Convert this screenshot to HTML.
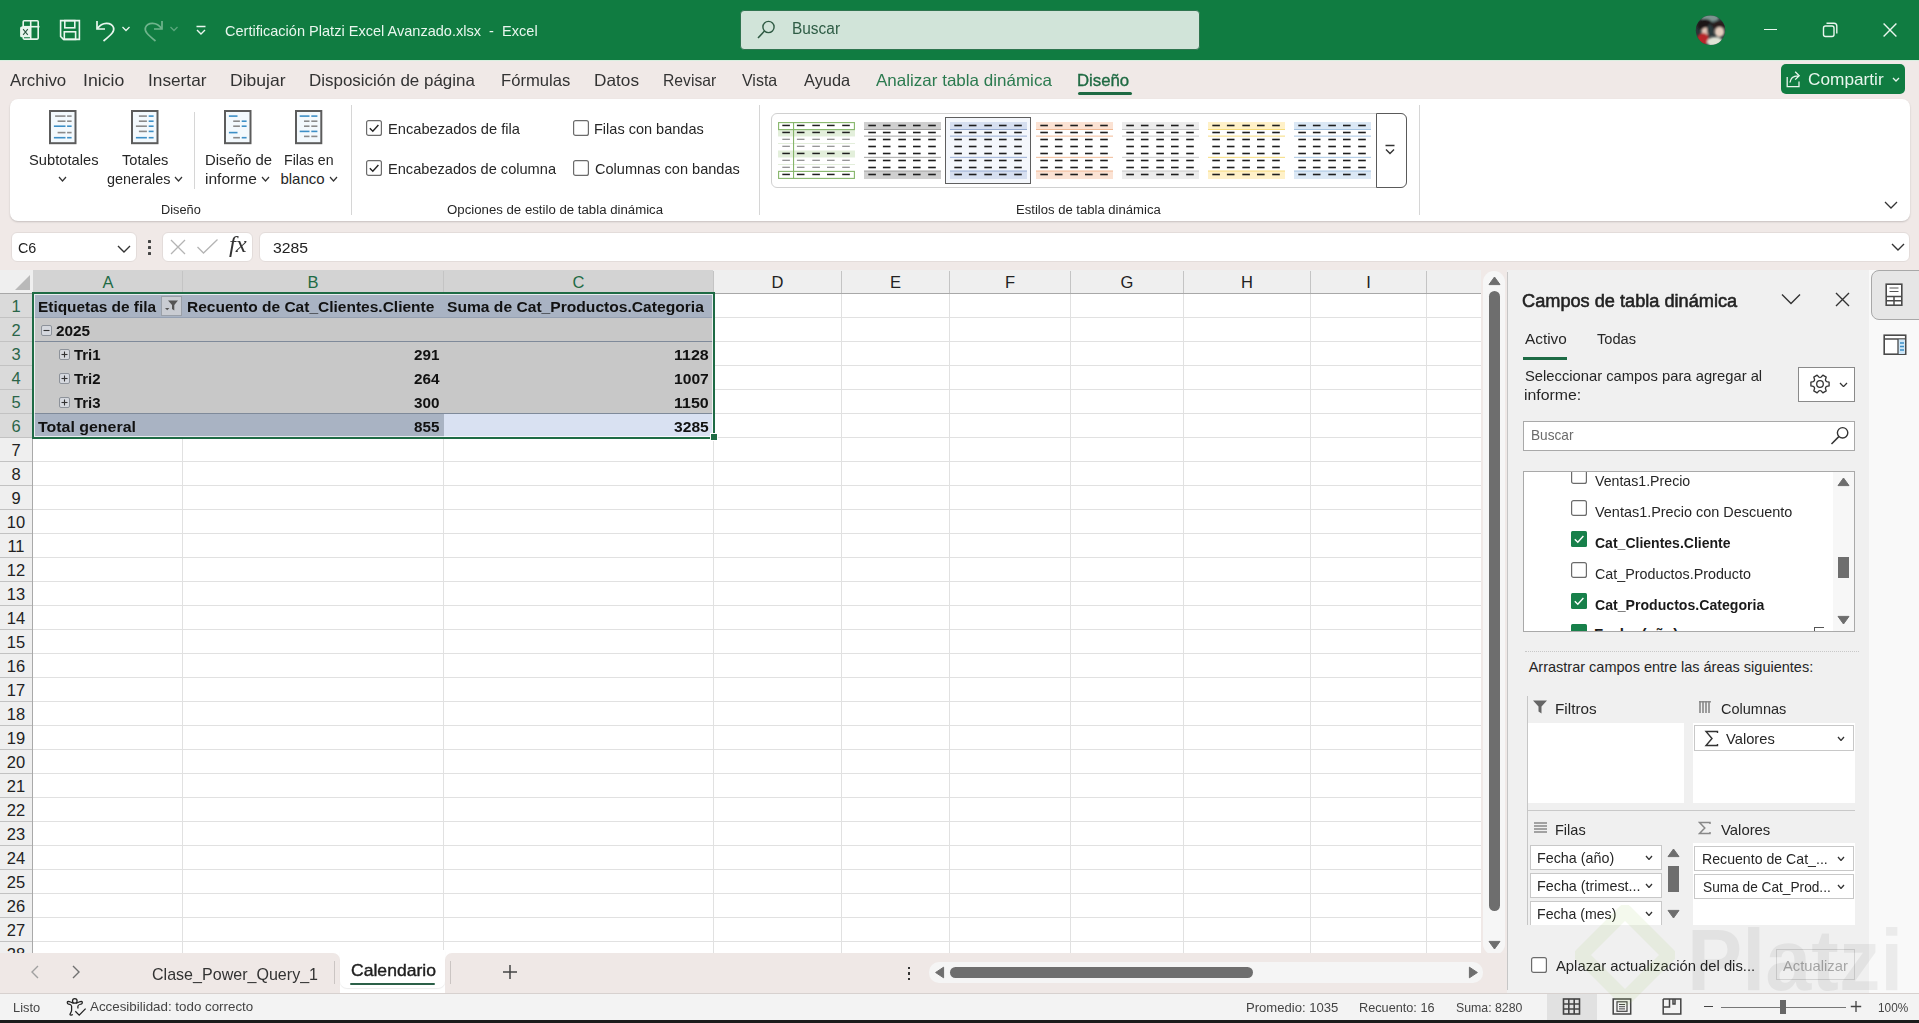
<!DOCTYPE html><html><head><meta charset="utf-8"><style>html,body{margin:0;padding:0;width:1919px;height:1023px;overflow:hidden;background:#f0e9e7}#app{position:relative;width:1919px;height:1023px;overflow:hidden;font-family:"Liberation Sans",sans-serif}#app svg{display:block}</style></head><body><div id="app"><div style="position:absolute;left:0px;top:0px;width:1919px;height:60px;background:#107c41"></div>
<svg style="position:absolute;left:18px;top:18px;" width="24" height="24" viewBox="0 0 24 24">
<rect x="5.2" y="2.8" width="15" height="18.3" rx="1" fill="none" stroke="#e9f6ee" stroke-width="1.6"/>
<line x1="12.7" y1="2.5" x2="12.7" y2="21.5" stroke="#e9f6ee" stroke-width="1.6"/>
<line x1="4.5" y1="8.7" x2="21.5" y2="8.7" stroke="#e9f6ee" stroke-width="1.6"/>
<rect x="2.1" y="8.5" width="10.9" height="10.8" rx="1.6" fill="#e9f6ee"/>
<path d="M5.1 11.2 L9.8 16.8 M9.8 11.2 L5.1 16.8" stroke="#2d5a43" stroke-width="1.1"/>
</svg>
<svg style="position:absolute;left:58px;top:18px;" width="24" height="24" viewBox="0 0 24 24">
<path d="M2.6 2.6 H21.4 V21.4 H5.5 L2.6 18.5 Z" fill="none" stroke="#e9f6ee" stroke-width="1.6"/>
<rect x="6.8" y="2.6" width="10" height="7.2" fill="none" stroke="#e9f6ee" stroke-width="1.6"/>
<rect x="6.3" y="13.8" width="11.3" height="7.6" fill="none" stroke="#e9f6ee" stroke-width="1.6"/>
</svg>
<svg style="position:absolute;left:94px;top:18px;" width="24" height="24" viewBox="0 0 24 24">
<path d="M3 3 V11 H11" fill="none" stroke="#e9f6ee" stroke-width="1.7"/>
<path d="M3.5 10.5 C8 3.5 17.5 4 19.5 9.5 C20.8 13 18 16 9.5 23" fill="none" stroke="#e9f6ee" stroke-width="1.7"/>
</svg>
<svg style="position:absolute;left:121px;top:25px;" width="10" height="8" viewBox="0 0 10 8"><path d="M1.5 2 L5 5.5 L8.5 2" fill="none" stroke="#e9f6ee" stroke-width="1.3"/></svg>
<svg style="position:absolute;left:141px;top:18px;" width="24" height="24" viewBox="0 0 24 24">
<path d="M21 3 V11 H13" fill="none" stroke="#6fb48c" stroke-width="1.7"/>
<path d="M20.5 10.5 C16 3.5 6.5 4 4.5 9.5 C3.2 13 6 16 14.5 23" fill="none" stroke="#6fb48c" stroke-width="1.7"/>
</svg>
<svg style="position:absolute;left:169px;top:25px;" width="10" height="8" viewBox="0 0 10 8"><path d="M1.5 2 L5 5.5 L8.5 2" fill="none" stroke="#5aa77c" stroke-width="1.3"/></svg>
<svg style="position:absolute;left:194px;top:25px;" width="14" height="12" viewBox="0 0 14 12"><path d="M2.5 1.5 H11.5 M3 5 L7 9 L11 5" fill="none" stroke="#e9f6ee" stroke-width="1.4"/></svg>
<div style="position:absolute;left:225.30px;top:22.700000000000003px;font:400 15px/1 'Liberation Sans';color:#e9f6ee;white-space:pre;transform:scaleX(0.9698);transform-origin:0 0;">Certificación Platzi Excel Avanzado.xlsx  -  Excel</div>
<div style="position:absolute;left:740px;top:10px;width:460px;height:40px;background:#d1e4d9;border-radius:4px;box-sizing:border-box;border:1px solid #2f7550"></div>
<svg style="position:absolute;left:755px;top:20px;" width="20" height="22" viewBox="0 0 20 22"><circle cx="13.5" cy="7" r="5.6" fill="none" stroke="#2f5a43" stroke-width="1.4"/><path d="M9.5 11 L3 18" stroke="#2f5a43" stroke-width="1.5"/></svg>
<div style="position:absolute;left:792.34px;top:20.9px;font:400 16px/1 'Liberation Sans';color:#2e5c45;white-space:pre;transform:scaleX(0.9642);transform-origin:0 0;">Buscar</div>
<svg style="position:absolute;left:1695px;top:15px;" width="31" height="31" viewBox="0 0 31 31"><defs><clipPath id="avc"><circle cx="15.5" cy="15.3" r="14.7"/></clipPath><filter id="avb"><feGaussianBlur stdDeviation="0.9"/></filter></defs><g clip-path="url(#avc)"><rect width="31" height="31" fill="#2b3538"/><g filter="url(#avb)"><ellipse cx="15" cy="3" rx="9" ry="4" fill="#7d9490"/><ellipse cx="10" cy="10" rx="8" ry="6" fill="#1e1616"/><ellipse cx="24" cy="11" rx="6.5" ry="5" fill="#2a1e1e"/><ellipse cx="11" cy="16.5" rx="4.6" ry="4" fill="#e3c6b8"/><ellipse cx="24.5" cy="17" rx="4.8" ry="5" fill="#e6cfc0"/><ellipse cx="8" cy="24" rx="6" ry="6" fill="#b8272a"/><ellipse cx="20" cy="27" rx="8" ry="5" fill="#dfe3d6"/><ellipse cx="15" cy="15" rx="3" ry="6" fill="#2c3a3d"/></g></g></svg>
<div style="position:absolute;left:1764px;top:29px;width:13px;height:1.4px;background:#e9f6ee"></div>
<svg style="position:absolute;left:1820px;top:20px;" width="20" height="20" viewBox="0 0 20 20"><rect x="3.5" y="6" width="10.5" height="10.5" rx="2" fill="none" stroke="#e9f6ee" stroke-width="1.4"/><path d="M6.5 3.2 H14 Q16.8 3.2 16.8 6 V13.5" fill="none" stroke="#e9f6ee" stroke-width="1.4"/></svg>
<svg style="position:absolute;left:1880px;top:20px;" width="20" height="20" viewBox="0 0 20 20"><path d="M3.6 3.6 L16.4 16.4 M16.4 3.6 L3.6 16.4" stroke="#e9f6ee" stroke-width="1.4"/></svg>
<div style="position:absolute;left:0px;top:60px;width:1919px;height:210px;background:#f0e9e7"></div>
<div style="position:absolute;left:0px;top:60px;width:1919px;height:1px;background:#d9efe0"></div>
<div style="position:absolute;left:10.30px;top:71.8px;font:400 16.5px/1 'Liberation Sans';color:#333;white-space:pre;transform:scaleX(1.0211);transform-origin:0 0;">Archivo</div>
<div style="position:absolute;left:82.93px;top:71.8px;font:400 16.5px/1 'Liberation Sans';color:#333;white-space:pre;transform:scaleX(1.0712);transform-origin:0 0;">Inicio</div>
<div style="position:absolute;left:147.95px;top:71.8px;font:400 16.5px/1 'Liberation Sans';color:#333;white-space:pre;transform:scaleX(1.0461);transform-origin:0 0;">Insertar</div>
<div style="position:absolute;left:229.94px;top:71.8px;font:400 16.5px/1 'Liberation Sans';color:#333;white-space:pre;transform:scaleX(1.0623);transform-origin:0 0;">Dibujar</div>
<div style="position:absolute;left:309.27px;top:71.8px;font:400 16.5px/1 'Liberation Sans';color:#333;white-space:pre;transform:scaleX(1.0275);transform-origin:0 0;">Disposición de página</div>
<div style="position:absolute;left:500.99px;top:71.8px;font:400 16.5px/1 'Liberation Sans';color:#333;white-space:pre;transform:scaleX(1.0072);transform-origin:0 0;">Fórmulas</div>
<div style="position:absolute;left:593.96px;top:71.8px;font:400 16.5px/1 'Liberation Sans';color:#333;white-space:pre;transform:scaleX(1.0441);transform-origin:0 0;">Datos</div>
<div style="position:absolute;left:663.05px;top:71.8px;font:400 16.5px/1 'Liberation Sans';color:#333;white-space:pre;transform:scaleX(0.9507);transform-origin:0 0;">Revisar</div>
<div style="position:absolute;left:742.00px;top:71.8px;font:400 16.5px/1 'Liberation Sans';color:#333;white-space:pre;transform:scaleX(0.9676);transform-origin:0 0;">Vista</div>
<div style="position:absolute;left:804.00px;top:71.8px;font:400 16.5px/1 'Liberation Sans';color:#333;white-space:pre;transform:scaleX(0.9934);transform-origin:0 0;">Ayuda</div>
<div style="position:absolute;left:876.30px;top:71.8px;font:400 16.5px/1 'Liberation Sans';color:#2b7a4f;white-space:pre;transform:scaleX(1.0308);transform-origin:0 0;">Analizar tabla dinámica</div>
<div style="position:absolute;left:1076.98px;top:71.8px;font:400 16.5px/1 'Liberation Sans';color:#1f6a43;white-space:pre;transform:scaleX(1.0162);transform-origin:0 0;-webkit-text-stroke:0.35px #1f6a43">Diseño</div>
<div style="position:absolute;left:1078px;top:92px;width:54px;height:3px;background:#1f6a43;border-radius:1.5px"></div>
<div style="position:absolute;left:1781px;top:64px;width:124px;height:30px;background:#107c41;border-radius:5px"></div>
<svg style="position:absolute;left:1785px;top:69px;" width="18" height="20" viewBox="0 0 18 20"><path d="M2.2 8 V17.6 H14 V12.5" fill="none" stroke="#e9f6ee" stroke-width="1.3"/><path d="M5 13.5 C5.5 9 8.5 6.8 13 6.8 M10.2 2.8 L14.2 6.8 L10.2 10.6" fill="none" stroke="#e9f6ee" stroke-width="1.3"/></svg>
<div style="position:absolute;left:1807.70px;top:70.9px;font:400 17px/1 'Liberation Sans';color:#e9f6ee;white-space:pre;transform:scaleX(1.0138);transform-origin:0 0;">Compartir</div>
<svg style="position:absolute;left:1889px;top:75px;" width="14" height="10" viewBox="0 0 14 10"><path d="M4 3 L7 6 L10 3" fill="none" stroke="#e9f6ee" stroke-width="1.3"/></svg>
<div style="position:absolute;left:10px;top:99px;width:1900px;height:122px;background:#fff;border-radius:8px;box-shadow:0 1px 2px rgba(0,0,0,0.18)"></div>
<svg style="position:absolute;left:49px;top:110px;" width="29" height="35" viewBox="0 0 29 35"><rect x="1" y="1" width="25.5" height="32.2" fill="#f3f9fd" stroke="#5c5c5c" stroke-width="2"/><line x1="6.1" y1="6.1" x2="16.5" y2="6.1" stroke="#8a8a8a" stroke-width="1.6"/><line x1="18.1" y1="6.1" x2="22.6" y2="6.1" stroke="#8a8a8a" stroke-width="1.6"/><line x1="8.6" y1="11.2" x2="16.5" y2="11.2" stroke="#8a8a8a" stroke-width="1.6"/><line x1="18.1" y1="11.2" x2="22.6" y2="11.2" stroke="#8a8a8a" stroke-width="1.6"/><line x1="4.9" y1="16.2" x2="16.5" y2="16.2" stroke="#3d8fc6" stroke-width="1.6"/><line x1="18.1" y1="16.2" x2="22.6" y2="16.2" stroke="#3d8fc6" stroke-width="1.6"/><line x1="8.6" y1="22.6" x2="16.5" y2="22.6" stroke="#8a8a8a" stroke-width="1.6"/><line x1="18.1" y1="22.6" x2="22.6" y2="22.6" stroke="#8a8a8a" stroke-width="1.6"/><line x1="4.9" y1="27.7" x2="16.5" y2="27.7" stroke="#3d8fc6" stroke-width="1.6"/><line x1="18.1" y1="27.7" x2="22.6" y2="27.7" stroke="#3d8fc6" stroke-width="1.6"/></svg>
<svg style="position:absolute;left:131px;top:110px;" width="29" height="35" viewBox="0 0 29 35"><rect x="1" y="1" width="25.5" height="32.2" fill="#f3f9fd" stroke="#5c5c5c" stroke-width="2"/><line x1="7.9" y1="6.1" x2="15.9" y2="6.1" stroke="#8a8a8a" stroke-width="1.6"/><line x1="17.7" y1="6.1" x2="22.6" y2="6.1" stroke="#3d8fc6" stroke-width="1.6"/><line x1="7.9" y1="11.2" x2="15.9" y2="11.2" stroke="#8a8a8a" stroke-width="1.6"/><line x1="17.7" y1="11.2" x2="22.6" y2="11.2" stroke="#3d8fc6" stroke-width="1.6"/><line x1="4.9" y1="16.2" x2="15.9" y2="16.2" stroke="#8a8a8a" stroke-width="1.6"/><line x1="17.7" y1="16.2" x2="22.6" y2="16.2" stroke="#3d8fc6" stroke-width="1.6"/><line x1="7.9" y1="21.4" x2="15.9" y2="21.4" stroke="#8a8a8a" stroke-width="1.6"/><line x1="17.7" y1="21.4" x2="22.6" y2="21.4" stroke="#3d8fc6" stroke-width="1.6"/><line x1="4.9" y1="27.7" x2="15.9" y2="27.7" stroke="#3d8fc6" stroke-width="1.6"/><line x1="17.7" y1="27.7" x2="22.6" y2="27.7" stroke="#3d8fc6" stroke-width="1.6"/></svg>
<svg style="position:absolute;left:224px;top:110px;" width="29" height="35" viewBox="0 0 29 35"><rect x="1" y="1" width="25.5" height="32.2" fill="#f3f9fd" stroke="#5c5c5c" stroke-width="2"/><line x1="4.9" y1="6.1" x2="13.5" y2="6.1" stroke="#3d8fc6" stroke-width="1.6"/><line x1="9.2" y1="11.2" x2="15.9" y2="11.2" stroke="#8a8a8a" stroke-width="1.6"/><line x1="17.7" y1="11.2" x2="22.6" y2="11.2" stroke="#3d8fc6" stroke-width="1.6"/><line x1="9.2" y1="16.2" x2="15.9" y2="16.2" stroke="#8a8a8a" stroke-width="1.6"/><line x1="17.7" y1="16.2" x2="22.6" y2="16.2" stroke="#3d8fc6" stroke-width="1.6"/><line x1="4.9" y1="22.6" x2="13.5" y2="22.6" stroke="#3d8fc6" stroke-width="1.6"/><line x1="9.2" y1="27.7" x2="15.9" y2="27.7" stroke="#8a8a8a" stroke-width="1.6"/><line x1="17.7" y1="27.7" x2="22.6" y2="27.7" stroke="#3d8fc6" stroke-width="1.6"/></svg>
<svg style="position:absolute;left:295px;top:110px;" width="28" height="35" viewBox="0 0 28 35"><rect x="1" y="1" width="25.3" height="32.2" fill="#f3f9fd" stroke="#5c5c5c" stroke-width="2"/><line x1="4.7" y1="6.1" x2="14.5" y2="6.1" stroke="#3d8fc6" stroke-width="1.6"/><line x1="16.3" y1="6.1" x2="22.4" y2="6.1" stroke="#3d8fc6" stroke-width="1.6"/><line x1="9.0" y1="11.2" x2="14.5" y2="11.2" stroke="#8a8a8a" stroke-width="1.6"/><line x1="16.3" y1="11.2" x2="22.4" y2="11.2" stroke="#8a8a8a" stroke-width="1.6"/><line x1="9.0" y1="16.2" x2="14.5" y2="16.2" stroke="#8a8a8a" stroke-width="1.6"/><line x1="16.3" y1="16.2" x2="22.4" y2="16.2" stroke="#8a8a8a" stroke-width="1.6"/><line x1="4.7" y1="21.4" x2="14.5" y2="21.4" stroke="#3d8fc6" stroke-width="1.6"/><line x1="16.3" y1="21.4" x2="22.4" y2="21.4" stroke="#3d8fc6" stroke-width="1.6"/><line x1="9.0" y1="26.4" x2="14.5" y2="26.4" stroke="#8a8a8a" stroke-width="1.6"/><line x1="16.3" y1="26.4" x2="22.4" y2="26.4" stroke="#8a8a8a" stroke-width="1.6"/></svg>
<div style="position:absolute;left:28.60px;top:151.8px;font:400 15px/1 'Liberation Sans';color:#262626;white-space:pre;transform:scaleX(0.9803);transform-origin:0 0;">Subtotales</div>
<svg style="position:absolute;left:57.9px;top:175.5px;" width="9" height="6" viewBox="0 0 9 6"><path d="M1 1 L4.5 5 L8 1" fill="none" stroke="#333" stroke-width="1.2"/></svg>
<div style="position:absolute;left:122.00px;top:151.8px;font:400 15px/1 'Liberation Sans';color:#262626;white-space:pre;transform:scaleX(0.9760);transform-origin:0 0;">Totales</div>
<div style="position:absolute;left:106.80px;top:171.3px;font:400 15px/1 'Liberation Sans';color:#262626;white-space:pre;transform:scaleX(0.9620);transform-origin:0 0;">generales</div>
<svg style="position:absolute;left:174.0px;top:175.5px;" width="9" height="6" viewBox="0 0 9 6"><path d="M1 1 L4.5 5 L8 1" fill="none" stroke="#333" stroke-width="1.2"/></svg>
<div style="position:absolute;left:194px;top:112px;width:1px;height:77px;background:#d6d6d6"></div>
<div style="position:absolute;left:204.61px;top:151.8px;font:400 15px/1 'Liberation Sans';color:#262626;white-space:pre;transform:scaleX(0.9924);transform-origin:0 0;">Diseño de</div>
<div style="position:absolute;left:204.56px;top:171.3px;font:400 15px/1 'Liberation Sans';color:#262626;white-space:pre;transform:scaleX(1.0354);transform-origin:0 0;">informe</div>
<svg style="position:absolute;left:260.9px;top:175.5px;" width="9" height="6" viewBox="0 0 9 6"><path d="M1 1 L4.5 5 L8 1" fill="none" stroke="#333" stroke-width="1.2"/></svg>
<div style="position:absolute;left:284.36px;top:151.8px;font:400 15px/1 'Liberation Sans';color:#262626;white-space:pre;transform:scaleX(0.9437);transform-origin:0 0;">Filas en</div>
<div style="position:absolute;left:280.40px;top:171.3px;font:400 15px/1 'Liberation Sans';color:#262626;white-space:pre;">blanco</div>
<svg style="position:absolute;left:329.3px;top:175.5px;" width="9" height="6" viewBox="0 0 9 6"><path d="M1 1 L4.5 5 L8 1" fill="none" stroke="#333" stroke-width="1.2"/></svg>
<div style="position:absolute;left:161.48px;top:203.9px;font:400 12.5px/1 'Liberation Sans';color:#262626;white-space:pre;transform:scaleX(1.0222);transform-origin:0 0;">Diseño</div>
<div style="position:absolute;left:351px;top:105px;width:1px;height:110px;background:#d6d6d6"></div>
<svg style="position:absolute;left:366px;top:120px;" width="16" height="16" viewBox="0 0 16 16"><rect x="0.6" y="0.6" width="14.8" height="14.8" rx="2" fill="#fff" stroke="#6b6b6b" stroke-width="1.2"/><path d="M3.8 8.2 L6.8 11.2 L12.4 5" fill="none" stroke="#222" stroke-width="1.4"/></svg>
<svg style="position:absolute;left:366px;top:160px;" width="16" height="16" viewBox="0 0 16 16"><rect x="0.6" y="0.6" width="14.8" height="14.8" rx="2" fill="#fff" stroke="#6b6b6b" stroke-width="1.2"/><path d="M3.8 8.2 L6.8 11.2 L12.4 5" fill="none" stroke="#222" stroke-width="1.4"/></svg>
<svg style="position:absolute;left:573px;top:120px;" width="16" height="16" viewBox="0 0 16 16"><rect x="0.6" y="0.6" width="14.8" height="14.8" rx="2" fill="#fff" stroke="#6b6b6b" stroke-width="1.2"/></svg>
<svg style="position:absolute;left:573px;top:160px;" width="16" height="16" viewBox="0 0 16 16"><rect x="0.6" y="0.6" width="14.8" height="14.8" rx="2" fill="#fff" stroke="#6b6b6b" stroke-width="1.2"/></svg>
<div style="position:absolute;left:387.82px;top:120.69999999999999px;font:400 15px/1 'Liberation Sans';color:#262626;white-space:pre;transform:scaleX(0.9766);transform-origin:0 0;">Encabezados de fila</div>
<div style="position:absolute;left:387.83px;top:160.6px;font:400 15px/1 'Liberation Sans';color:#262626;white-space:pre;transform:scaleX(0.9734);transform-origin:0 0;">Encabezados de columna</div>
<div style="position:absolute;left:594.43px;top:120.69999999999999px;font:400 15px/1 'Liberation Sans';color:#262626;white-space:pre;transform:scaleX(0.9678);transform-origin:0 0;">Filas con bandas</div>
<div style="position:absolute;left:595.40px;top:160.6px;font:400 15px/1 'Liberation Sans';color:#262626;white-space:pre;transform:scaleX(0.9700);transform-origin:0 0;">Columnas con bandas</div>
<div style="position:absolute;left:446.50px;top:204px;font:400 12.5px/1 'Liberation Sans';color:#262626;white-space:pre;transform:scaleX(1.0576);transform-origin:0 0;">Opciones de estilo de tabla dinámica</div>
<div style="position:absolute;left:759px;top:105px;width:1px;height:110px;background:#d6d6d6"></div>
<div style="position:absolute;left:771px;top:113px;width:636px;height:75px;box-sizing:border-box;border:1px solid #d0d0d0;border-radius:6px;background:#fff"></div>
<div style="position:absolute;left:1376px;top:113px;width:31px;height:75px;box-sizing:border-box;border:1px solid #5a5a5a;border-radius:0 6px 6px 0;background:#fff"></div>
<svg style="position:absolute;left:1382px;top:142.5px;" width="16" height="14" viewBox="0 0 16 14"><path d="M3.5 2.5 H12.5 M4 6.5 L8 10.5 L12 6.5" fill="none" stroke="#333" stroke-width="1.4"/></svg>
<svg style="position:absolute;left:778px;top:122px;" width="77" height="57" viewBox="0 0 77 57"><rect x="0" y="7.5" width="77" height="7" fill="#e3efdb"/><rect x="0" y="28.5" width="77" height="7" fill="#e3efdb"/><rect x="0" y="21" width="77" height="0.8" fill="#dcead2"/><rect x="0" y="42" width="77" height="0.8" fill="#dcead2"/><rect x="0.6" y="0.6" width="75.8" height="7" fill="none" stroke="#86b66a" stroke-width="1.1"/><rect x="0.6" y="49.4" width="75.8" height="7" fill="none" stroke="#86b66a" stroke-width="1.1"/><rect x="15" y="0" width="1.1" height="57" fill="#86b66a"/><rect x="4.3" y="2.7" width="7.6" height="1.5" fill="#1e1e1e"/><rect x="18.9" y="2.7" width="7.6" height="1.5" fill="#1e1e1e"/><rect x="34.3" y="2.7" width="7.6" height="1.5" fill="#1e1e1e"/><rect x="49" y="2.7" width="7.6" height="1.5" fill="#1e1e1e"/><rect x="64.2" y="2.7" width="7.6" height="1.5" fill="#1e1e1e"/><rect x="4.3" y="9.7" width="7.6" height="1.5" fill="#1e1e1e"/><rect x="18.9" y="9.7" width="7.6" height="1.5" fill="#1e1e1e"/><rect x="34.3" y="9.7" width="7.6" height="1.5" fill="#1e1e1e"/><rect x="49" y="9.7" width="7.6" height="1.5" fill="#1e1e1e"/><rect x="64.2" y="9.7" width="7.6" height="1.5" fill="#1e1e1e"/><rect x="4.3" y="16.7" width="7.6" height="1.2" fill="#8c8c8c"/><rect x="18.9" y="16.7" width="7.6" height="1.2" fill="#8c8c8c"/><rect x="34.3" y="16.7" width="7.6" height="1.2" fill="#8c8c8c"/><rect x="49" y="16.7" width="7.6" height="1.2" fill="#8c8c8c"/><rect x="64.2" y="16.7" width="7.6" height="1.2" fill="#8c8c8c"/><rect x="4.3" y="23.7" width="7.6" height="1.2" fill="#8c8c8c"/><rect x="18.9" y="23.7" width="7.6" height="1.2" fill="#8c8c8c"/><rect x="34.3" y="23.7" width="7.6" height="1.2" fill="#8c8c8c"/><rect x="49" y="23.7" width="7.6" height="1.2" fill="#8c8c8c"/><rect x="64.2" y="23.7" width="7.6" height="1.2" fill="#8c8c8c"/><rect x="4.3" y="30.7" width="7.6" height="1.5" fill="#1e1e1e"/><rect x="18.9" y="30.7" width="7.6" height="1.5" fill="#1e1e1e"/><rect x="34.3" y="30.7" width="7.6" height="1.5" fill="#1e1e1e"/><rect x="49" y="30.7" width="7.6" height="1.5" fill="#1e1e1e"/><rect x="64.2" y="30.7" width="7.6" height="1.5" fill="#1e1e1e"/><rect x="4.3" y="37.7" width="7.6" height="1.2" fill="#8c8c8c"/><rect x="18.9" y="37.7" width="7.6" height="1.2" fill="#8c8c8c"/><rect x="34.3" y="37.7" width="7.6" height="1.2" fill="#8c8c8c"/><rect x="49" y="37.7" width="7.6" height="1.2" fill="#8c8c8c"/><rect x="64.2" y="37.7" width="7.6" height="1.2" fill="#8c8c8c"/><rect x="4.3" y="44.7" width="7.6" height="1.2" fill="#8c8c8c"/><rect x="18.9" y="44.7" width="7.6" height="1.2" fill="#8c8c8c"/><rect x="34.3" y="44.7" width="7.6" height="1.2" fill="#8c8c8c"/><rect x="49" y="44.7" width="7.6" height="1.2" fill="#8c8c8c"/><rect x="64.2" y="44.7" width="7.6" height="1.2" fill="#8c8c8c"/><rect x="4.3" y="51.7" width="7.6" height="1.5" fill="#1e1e1e"/><rect x="18.9" y="51.7" width="7.6" height="1.5" fill="#1e1e1e"/><rect x="34.3" y="51.7" width="7.6" height="1.5" fill="#1e1e1e"/><rect x="49" y="51.7" width="7.6" height="1.5" fill="#1e1e1e"/><rect x="64.2" y="51.7" width="7.6" height="1.5" fill="#1e1e1e"/></svg>
<svg style="position:absolute;left:864px;top:122px;" width="77" height="57" viewBox="0 0 77 57"><rect x="0" y="0" width="77" height="7.5" fill="#cfcfcf"/><rect x="0" y="49" width="77" height="8" fill="#cfcfcf"/><rect x="0" y="7.05" width="77" height="0.9" fill="#9a9a9a"/><rect x="0" y="13.65" width="77" height="0.9" fill="#9a9a9a"/><rect x="0" y="34.849999999999994" width="77" height="0.9" fill="#9a9a9a"/><rect x="0" y="48.55" width="77" height="0.9" fill="#9a9a9a"/><rect x="4.3" y="2.7" width="7.6" height="1.6" fill="#1e1e1e"/><rect x="18.9" y="2.7" width="7.6" height="1.6" fill="#1e1e1e"/><rect x="34.3" y="2.7" width="7.6" height="1.6" fill="#1e1e1e"/><rect x="49" y="2.7" width="7.6" height="1.6" fill="#1e1e1e"/><rect x="64.2" y="2.7" width="7.6" height="1.6" fill="#1e1e1e"/><rect x="4.3" y="9.7" width="7.6" height="1.6" fill="#1e1e1e"/><rect x="18.9" y="9.7" width="7.6" height="1.6" fill="#1e1e1e"/><rect x="34.3" y="9.7" width="7.6" height="1.6" fill="#1e1e1e"/><rect x="49" y="9.7" width="7.6" height="1.6" fill="#1e1e1e"/><rect x="64.2" y="9.7" width="7.6" height="1.6" fill="#1e1e1e"/><rect x="4.3" y="16.7" width="7.6" height="1.6" fill="#1e1e1e"/><rect x="18.9" y="16.7" width="7.6" height="1.6" fill="#1e1e1e"/><rect x="34.3" y="16.7" width="7.6" height="1.6" fill="#1e1e1e"/><rect x="49" y="16.7" width="7.6" height="1.6" fill="#1e1e1e"/><rect x="64.2" y="16.7" width="7.6" height="1.6" fill="#1e1e1e"/><rect x="4.3" y="23.7" width="7.6" height="1.6" fill="#1e1e1e"/><rect x="18.9" y="23.7" width="7.6" height="1.6" fill="#1e1e1e"/><rect x="34.3" y="23.7" width="7.6" height="1.6" fill="#1e1e1e"/><rect x="49" y="23.7" width="7.6" height="1.6" fill="#1e1e1e"/><rect x="64.2" y="23.7" width="7.6" height="1.6" fill="#1e1e1e"/><rect x="4.3" y="30.7" width="7.6" height="1.6" fill="#1e1e1e"/><rect x="18.9" y="30.7" width="7.6" height="1.6" fill="#1e1e1e"/><rect x="34.3" y="30.7" width="7.6" height="1.6" fill="#1e1e1e"/><rect x="49" y="30.7" width="7.6" height="1.6" fill="#1e1e1e"/><rect x="64.2" y="30.7" width="7.6" height="1.6" fill="#1e1e1e"/><rect x="4.3" y="37.7" width="7.6" height="1.6" fill="#1e1e1e"/><rect x="18.9" y="37.7" width="7.6" height="1.6" fill="#1e1e1e"/><rect x="34.3" y="37.7" width="7.6" height="1.6" fill="#1e1e1e"/><rect x="49" y="37.7" width="7.6" height="1.6" fill="#1e1e1e"/><rect x="64.2" y="37.7" width="7.6" height="1.6" fill="#1e1e1e"/><rect x="4.3" y="44.7" width="7.6" height="1.6" fill="#1e1e1e"/><rect x="18.9" y="44.7" width="7.6" height="1.6" fill="#1e1e1e"/><rect x="34.3" y="44.7" width="7.6" height="1.6" fill="#1e1e1e"/><rect x="49" y="44.7" width="7.6" height="1.6" fill="#1e1e1e"/><rect x="64.2" y="44.7" width="7.6" height="1.6" fill="#1e1e1e"/><rect x="4.3" y="51.7" width="7.6" height="1.6" fill="#1e1e1e"/><rect x="18.9" y="51.7" width="7.6" height="1.6" fill="#1e1e1e"/><rect x="34.3" y="51.7" width="7.6" height="1.6" fill="#1e1e1e"/><rect x="49" y="51.7" width="7.6" height="1.6" fill="#1e1e1e"/><rect x="64.2" y="51.7" width="7.6" height="1.6" fill="#1e1e1e"/></svg>
<div style="position:absolute;left:945px;top:117px;width:86px;height:67px;box-sizing:border-box;border:1.5px solid #5f5f5f;background:#f4f7fc"></div>
<svg style="position:absolute;left:950px;top:122px;" width="77" height="57" viewBox="0 0 77 57"><rect x="0" y="0" width="77" height="7.5" fill="#d6dff0"/><rect x="0" y="49" width="77" height="8" fill="#d6dff0"/><rect x="0" y="7.05" width="77" height="0.9" fill="#8ea5cf"/><rect x="0" y="13.65" width="77" height="0.9" fill="#8ea5cf"/><rect x="0" y="34.849999999999994" width="77" height="0.9" fill="#8ea5cf"/><rect x="0" y="48.55" width="77" height="0.9" fill="#8ea5cf"/><rect x="4.3" y="2.7" width="7.6" height="1.6" fill="#1e1e1e"/><rect x="18.9" y="2.7" width="7.6" height="1.6" fill="#1e1e1e"/><rect x="34.3" y="2.7" width="7.6" height="1.6" fill="#1e1e1e"/><rect x="49" y="2.7" width="7.6" height="1.6" fill="#1e1e1e"/><rect x="64.2" y="2.7" width="7.6" height="1.6" fill="#1e1e1e"/><rect x="4.3" y="9.7" width="7.6" height="1.6" fill="#1e1e1e"/><rect x="18.9" y="9.7" width="7.6" height="1.6" fill="#1e1e1e"/><rect x="34.3" y="9.7" width="7.6" height="1.6" fill="#1e1e1e"/><rect x="49" y="9.7" width="7.6" height="1.6" fill="#1e1e1e"/><rect x="64.2" y="9.7" width="7.6" height="1.6" fill="#1e1e1e"/><rect x="4.3" y="16.7" width="7.6" height="1.6" fill="#1e1e1e"/><rect x="18.9" y="16.7" width="7.6" height="1.6" fill="#1e1e1e"/><rect x="34.3" y="16.7" width="7.6" height="1.6" fill="#1e1e1e"/><rect x="49" y="16.7" width="7.6" height="1.6" fill="#1e1e1e"/><rect x="64.2" y="16.7" width="7.6" height="1.6" fill="#1e1e1e"/><rect x="4.3" y="23.7" width="7.6" height="1.6" fill="#1e1e1e"/><rect x="18.9" y="23.7" width="7.6" height="1.6" fill="#1e1e1e"/><rect x="34.3" y="23.7" width="7.6" height="1.6" fill="#1e1e1e"/><rect x="49" y="23.7" width="7.6" height="1.6" fill="#1e1e1e"/><rect x="64.2" y="23.7" width="7.6" height="1.6" fill="#1e1e1e"/><rect x="4.3" y="30.7" width="7.6" height="1.6" fill="#1e1e1e"/><rect x="18.9" y="30.7" width="7.6" height="1.6" fill="#1e1e1e"/><rect x="34.3" y="30.7" width="7.6" height="1.6" fill="#1e1e1e"/><rect x="49" y="30.7" width="7.6" height="1.6" fill="#1e1e1e"/><rect x="64.2" y="30.7" width="7.6" height="1.6" fill="#1e1e1e"/><rect x="4.3" y="37.7" width="7.6" height="1.6" fill="#1e1e1e"/><rect x="18.9" y="37.7" width="7.6" height="1.6" fill="#1e1e1e"/><rect x="34.3" y="37.7" width="7.6" height="1.6" fill="#1e1e1e"/><rect x="49" y="37.7" width="7.6" height="1.6" fill="#1e1e1e"/><rect x="64.2" y="37.7" width="7.6" height="1.6" fill="#1e1e1e"/><rect x="4.3" y="44.7" width="7.6" height="1.6" fill="#1e1e1e"/><rect x="18.9" y="44.7" width="7.6" height="1.6" fill="#1e1e1e"/><rect x="34.3" y="44.7" width="7.6" height="1.6" fill="#1e1e1e"/><rect x="49" y="44.7" width="7.6" height="1.6" fill="#1e1e1e"/><rect x="64.2" y="44.7" width="7.6" height="1.6" fill="#1e1e1e"/><rect x="4.3" y="51.7" width="7.6" height="1.6" fill="#1e1e1e"/><rect x="18.9" y="51.7" width="7.6" height="1.6" fill="#1e1e1e"/><rect x="34.3" y="51.7" width="7.6" height="1.6" fill="#1e1e1e"/><rect x="49" y="51.7" width="7.6" height="1.6" fill="#1e1e1e"/><rect x="64.2" y="51.7" width="7.6" height="1.6" fill="#1e1e1e"/></svg>
<svg style="position:absolute;left:1036px;top:122px;" width="77" height="57" viewBox="0 0 77 57"><rect x="0" y="0" width="77" height="7.5" fill="#fbe2d3"/><rect x="0" y="49" width="77" height="8" fill="#fbe2d3"/><rect x="0" y="7.05" width="77" height="0.9" fill="#f0b28a"/><rect x="0" y="13.65" width="77" height="0.9" fill="#f0b28a"/><rect x="0" y="34.849999999999994" width="77" height="0.9" fill="#f0b28a"/><rect x="0" y="48.55" width="77" height="0.9" fill="#f0b28a"/><rect x="4.3" y="2.7" width="7.6" height="1.6" fill="#1e1e1e"/><rect x="18.9" y="2.7" width="7.6" height="1.6" fill="#1e1e1e"/><rect x="34.3" y="2.7" width="7.6" height="1.6" fill="#1e1e1e"/><rect x="49" y="2.7" width="7.6" height="1.6" fill="#1e1e1e"/><rect x="64.2" y="2.7" width="7.6" height="1.6" fill="#1e1e1e"/><rect x="4.3" y="9.7" width="7.6" height="1.6" fill="#1e1e1e"/><rect x="18.9" y="9.7" width="7.6" height="1.6" fill="#1e1e1e"/><rect x="34.3" y="9.7" width="7.6" height="1.6" fill="#1e1e1e"/><rect x="49" y="9.7" width="7.6" height="1.6" fill="#1e1e1e"/><rect x="64.2" y="9.7" width="7.6" height="1.6" fill="#1e1e1e"/><rect x="4.3" y="16.7" width="7.6" height="1.6" fill="#1e1e1e"/><rect x="18.9" y="16.7" width="7.6" height="1.6" fill="#1e1e1e"/><rect x="34.3" y="16.7" width="7.6" height="1.6" fill="#1e1e1e"/><rect x="49" y="16.7" width="7.6" height="1.6" fill="#1e1e1e"/><rect x="64.2" y="16.7" width="7.6" height="1.6" fill="#1e1e1e"/><rect x="4.3" y="23.7" width="7.6" height="1.6" fill="#1e1e1e"/><rect x="18.9" y="23.7" width="7.6" height="1.6" fill="#1e1e1e"/><rect x="34.3" y="23.7" width="7.6" height="1.6" fill="#1e1e1e"/><rect x="49" y="23.7" width="7.6" height="1.6" fill="#1e1e1e"/><rect x="64.2" y="23.7" width="7.6" height="1.6" fill="#1e1e1e"/><rect x="4.3" y="30.7" width="7.6" height="1.6" fill="#1e1e1e"/><rect x="18.9" y="30.7" width="7.6" height="1.6" fill="#1e1e1e"/><rect x="34.3" y="30.7" width="7.6" height="1.6" fill="#1e1e1e"/><rect x="49" y="30.7" width="7.6" height="1.6" fill="#1e1e1e"/><rect x="64.2" y="30.7" width="7.6" height="1.6" fill="#1e1e1e"/><rect x="4.3" y="37.7" width="7.6" height="1.6" fill="#1e1e1e"/><rect x="18.9" y="37.7" width="7.6" height="1.6" fill="#1e1e1e"/><rect x="34.3" y="37.7" width="7.6" height="1.6" fill="#1e1e1e"/><rect x="49" y="37.7" width="7.6" height="1.6" fill="#1e1e1e"/><rect x="64.2" y="37.7" width="7.6" height="1.6" fill="#1e1e1e"/><rect x="4.3" y="44.7" width="7.6" height="1.6" fill="#1e1e1e"/><rect x="18.9" y="44.7" width="7.6" height="1.6" fill="#1e1e1e"/><rect x="34.3" y="44.7" width="7.6" height="1.6" fill="#1e1e1e"/><rect x="49" y="44.7" width="7.6" height="1.6" fill="#1e1e1e"/><rect x="64.2" y="44.7" width="7.6" height="1.6" fill="#1e1e1e"/><rect x="4.3" y="51.7" width="7.6" height="1.6" fill="#1e1e1e"/><rect x="18.9" y="51.7" width="7.6" height="1.6" fill="#1e1e1e"/><rect x="34.3" y="51.7" width="7.6" height="1.6" fill="#1e1e1e"/><rect x="49" y="51.7" width="7.6" height="1.6" fill="#1e1e1e"/><rect x="64.2" y="51.7" width="7.6" height="1.6" fill="#1e1e1e"/></svg>
<svg style="position:absolute;left:1122px;top:122px;" width="77" height="57" viewBox="0 0 77 57"><rect x="0" y="0" width="77" height="7.5" fill="#ececec"/><rect x="0" y="49" width="77" height="8" fill="#ececec"/><rect x="0" y="7.05" width="77" height="0.9" fill="#c4c4c4"/><rect x="0" y="13.65" width="77" height="0.9" fill="#c4c4c4"/><rect x="0" y="34.849999999999994" width="77" height="0.9" fill="#c4c4c4"/><rect x="0" y="48.55" width="77" height="0.9" fill="#c4c4c4"/><rect x="4.3" y="2.7" width="7.6" height="1.6" fill="#1e1e1e"/><rect x="18.9" y="2.7" width="7.6" height="1.6" fill="#1e1e1e"/><rect x="34.3" y="2.7" width="7.6" height="1.6" fill="#1e1e1e"/><rect x="49" y="2.7" width="7.6" height="1.6" fill="#1e1e1e"/><rect x="64.2" y="2.7" width="7.6" height="1.6" fill="#1e1e1e"/><rect x="4.3" y="9.7" width="7.6" height="1.6" fill="#1e1e1e"/><rect x="18.9" y="9.7" width="7.6" height="1.6" fill="#1e1e1e"/><rect x="34.3" y="9.7" width="7.6" height="1.6" fill="#1e1e1e"/><rect x="49" y="9.7" width="7.6" height="1.6" fill="#1e1e1e"/><rect x="64.2" y="9.7" width="7.6" height="1.6" fill="#1e1e1e"/><rect x="4.3" y="16.7" width="7.6" height="1.6" fill="#1e1e1e"/><rect x="18.9" y="16.7" width="7.6" height="1.6" fill="#1e1e1e"/><rect x="34.3" y="16.7" width="7.6" height="1.6" fill="#1e1e1e"/><rect x="49" y="16.7" width="7.6" height="1.6" fill="#1e1e1e"/><rect x="64.2" y="16.7" width="7.6" height="1.6" fill="#1e1e1e"/><rect x="4.3" y="23.7" width="7.6" height="1.6" fill="#1e1e1e"/><rect x="18.9" y="23.7" width="7.6" height="1.6" fill="#1e1e1e"/><rect x="34.3" y="23.7" width="7.6" height="1.6" fill="#1e1e1e"/><rect x="49" y="23.7" width="7.6" height="1.6" fill="#1e1e1e"/><rect x="64.2" y="23.7" width="7.6" height="1.6" fill="#1e1e1e"/><rect x="4.3" y="30.7" width="7.6" height="1.6" fill="#1e1e1e"/><rect x="18.9" y="30.7" width="7.6" height="1.6" fill="#1e1e1e"/><rect x="34.3" y="30.7" width="7.6" height="1.6" fill="#1e1e1e"/><rect x="49" y="30.7" width="7.6" height="1.6" fill="#1e1e1e"/><rect x="64.2" y="30.7" width="7.6" height="1.6" fill="#1e1e1e"/><rect x="4.3" y="37.7" width="7.6" height="1.6" fill="#1e1e1e"/><rect x="18.9" y="37.7" width="7.6" height="1.6" fill="#1e1e1e"/><rect x="34.3" y="37.7" width="7.6" height="1.6" fill="#1e1e1e"/><rect x="49" y="37.7" width="7.6" height="1.6" fill="#1e1e1e"/><rect x="64.2" y="37.7" width="7.6" height="1.6" fill="#1e1e1e"/><rect x="4.3" y="44.7" width="7.6" height="1.6" fill="#1e1e1e"/><rect x="18.9" y="44.7" width="7.6" height="1.6" fill="#1e1e1e"/><rect x="34.3" y="44.7" width="7.6" height="1.6" fill="#1e1e1e"/><rect x="49" y="44.7" width="7.6" height="1.6" fill="#1e1e1e"/><rect x="64.2" y="44.7" width="7.6" height="1.6" fill="#1e1e1e"/><rect x="4.3" y="51.7" width="7.6" height="1.6" fill="#1e1e1e"/><rect x="18.9" y="51.7" width="7.6" height="1.6" fill="#1e1e1e"/><rect x="34.3" y="51.7" width="7.6" height="1.6" fill="#1e1e1e"/><rect x="49" y="51.7" width="7.6" height="1.6" fill="#1e1e1e"/><rect x="64.2" y="51.7" width="7.6" height="1.6" fill="#1e1e1e"/></svg>
<svg style="position:absolute;left:1208px;top:122px;" width="77" height="57" viewBox="0 0 77 57"><rect x="0" y="0" width="77" height="7.5" fill="#fff1c8"/><rect x="0" y="49" width="77" height="8" fill="#fff1c8"/><rect x="0" y="7.05" width="77" height="0.9" fill="#f5d76e"/><rect x="0" y="13.65" width="77" height="0.9" fill="#f5d76e"/><rect x="0" y="34.849999999999994" width="77" height="0.9" fill="#f5d76e"/><rect x="0" y="48.55" width="77" height="0.9" fill="#f5d76e"/><rect x="4.3" y="2.7" width="7.6" height="1.6" fill="#1e1e1e"/><rect x="18.9" y="2.7" width="7.6" height="1.6" fill="#1e1e1e"/><rect x="34.3" y="2.7" width="7.6" height="1.6" fill="#1e1e1e"/><rect x="49" y="2.7" width="7.6" height="1.6" fill="#1e1e1e"/><rect x="64.2" y="2.7" width="7.6" height="1.6" fill="#1e1e1e"/><rect x="4.3" y="9.7" width="7.6" height="1.6" fill="#1e1e1e"/><rect x="18.9" y="9.7" width="7.6" height="1.6" fill="#1e1e1e"/><rect x="34.3" y="9.7" width="7.6" height="1.6" fill="#1e1e1e"/><rect x="49" y="9.7" width="7.6" height="1.6" fill="#1e1e1e"/><rect x="64.2" y="9.7" width="7.6" height="1.6" fill="#1e1e1e"/><rect x="4.3" y="16.7" width="7.6" height="1.6" fill="#1e1e1e"/><rect x="18.9" y="16.7" width="7.6" height="1.6" fill="#1e1e1e"/><rect x="34.3" y="16.7" width="7.6" height="1.6" fill="#1e1e1e"/><rect x="49" y="16.7" width="7.6" height="1.6" fill="#1e1e1e"/><rect x="64.2" y="16.7" width="7.6" height="1.6" fill="#1e1e1e"/><rect x="4.3" y="23.7" width="7.6" height="1.6" fill="#1e1e1e"/><rect x="18.9" y="23.7" width="7.6" height="1.6" fill="#1e1e1e"/><rect x="34.3" y="23.7" width="7.6" height="1.6" fill="#1e1e1e"/><rect x="49" y="23.7" width="7.6" height="1.6" fill="#1e1e1e"/><rect x="64.2" y="23.7" width="7.6" height="1.6" fill="#1e1e1e"/><rect x="4.3" y="30.7" width="7.6" height="1.6" fill="#1e1e1e"/><rect x="18.9" y="30.7" width="7.6" height="1.6" fill="#1e1e1e"/><rect x="34.3" y="30.7" width="7.6" height="1.6" fill="#1e1e1e"/><rect x="49" y="30.7" width="7.6" height="1.6" fill="#1e1e1e"/><rect x="64.2" y="30.7" width="7.6" height="1.6" fill="#1e1e1e"/><rect x="4.3" y="37.7" width="7.6" height="1.6" fill="#1e1e1e"/><rect x="18.9" y="37.7" width="7.6" height="1.6" fill="#1e1e1e"/><rect x="34.3" y="37.7" width="7.6" height="1.6" fill="#1e1e1e"/><rect x="49" y="37.7" width="7.6" height="1.6" fill="#1e1e1e"/><rect x="64.2" y="37.7" width="7.6" height="1.6" fill="#1e1e1e"/><rect x="4.3" y="44.7" width="7.6" height="1.6" fill="#1e1e1e"/><rect x="18.9" y="44.7" width="7.6" height="1.6" fill="#1e1e1e"/><rect x="34.3" y="44.7" width="7.6" height="1.6" fill="#1e1e1e"/><rect x="49" y="44.7" width="7.6" height="1.6" fill="#1e1e1e"/><rect x="64.2" y="44.7" width="7.6" height="1.6" fill="#1e1e1e"/><rect x="4.3" y="51.7" width="7.6" height="1.6" fill="#1e1e1e"/><rect x="18.9" y="51.7" width="7.6" height="1.6" fill="#1e1e1e"/><rect x="34.3" y="51.7" width="7.6" height="1.6" fill="#1e1e1e"/><rect x="49" y="51.7" width="7.6" height="1.6" fill="#1e1e1e"/><rect x="64.2" y="51.7" width="7.6" height="1.6" fill="#1e1e1e"/></svg>
<svg style="position:absolute;left:1294px;top:122px;" width="77" height="57" viewBox="0 0 77 57"><rect x="0" y="0" width="77" height="7.5" fill="#dbe8f5"/><rect x="0" y="49" width="77" height="8" fill="#dbe8f5"/><rect x="0" y="7.05" width="77" height="0.9" fill="#9dbfdf"/><rect x="0" y="13.65" width="77" height="0.9" fill="#9dbfdf"/><rect x="0" y="34.849999999999994" width="77" height="0.9" fill="#9dbfdf"/><rect x="0" y="48.55" width="77" height="0.9" fill="#9dbfdf"/><rect x="4.3" y="2.7" width="7.6" height="1.6" fill="#1e1e1e"/><rect x="18.9" y="2.7" width="7.6" height="1.6" fill="#1e1e1e"/><rect x="34.3" y="2.7" width="7.6" height="1.6" fill="#1e1e1e"/><rect x="49" y="2.7" width="7.6" height="1.6" fill="#1e1e1e"/><rect x="64.2" y="2.7" width="7.6" height="1.6" fill="#1e1e1e"/><rect x="4.3" y="9.7" width="7.6" height="1.6" fill="#1e1e1e"/><rect x="18.9" y="9.7" width="7.6" height="1.6" fill="#1e1e1e"/><rect x="34.3" y="9.7" width="7.6" height="1.6" fill="#1e1e1e"/><rect x="49" y="9.7" width="7.6" height="1.6" fill="#1e1e1e"/><rect x="64.2" y="9.7" width="7.6" height="1.6" fill="#1e1e1e"/><rect x="4.3" y="16.7" width="7.6" height="1.6" fill="#1e1e1e"/><rect x="18.9" y="16.7" width="7.6" height="1.6" fill="#1e1e1e"/><rect x="34.3" y="16.7" width="7.6" height="1.6" fill="#1e1e1e"/><rect x="49" y="16.7" width="7.6" height="1.6" fill="#1e1e1e"/><rect x="64.2" y="16.7" width="7.6" height="1.6" fill="#1e1e1e"/><rect x="4.3" y="23.7" width="7.6" height="1.6" fill="#1e1e1e"/><rect x="18.9" y="23.7" width="7.6" height="1.6" fill="#1e1e1e"/><rect x="34.3" y="23.7" width="7.6" height="1.6" fill="#1e1e1e"/><rect x="49" y="23.7" width="7.6" height="1.6" fill="#1e1e1e"/><rect x="64.2" y="23.7" width="7.6" height="1.6" fill="#1e1e1e"/><rect x="4.3" y="30.7" width="7.6" height="1.6" fill="#1e1e1e"/><rect x="18.9" y="30.7" width="7.6" height="1.6" fill="#1e1e1e"/><rect x="34.3" y="30.7" width="7.6" height="1.6" fill="#1e1e1e"/><rect x="49" y="30.7" width="7.6" height="1.6" fill="#1e1e1e"/><rect x="64.2" y="30.7" width="7.6" height="1.6" fill="#1e1e1e"/><rect x="4.3" y="37.7" width="7.6" height="1.6" fill="#1e1e1e"/><rect x="18.9" y="37.7" width="7.6" height="1.6" fill="#1e1e1e"/><rect x="34.3" y="37.7" width="7.6" height="1.6" fill="#1e1e1e"/><rect x="49" y="37.7" width="7.6" height="1.6" fill="#1e1e1e"/><rect x="64.2" y="37.7" width="7.6" height="1.6" fill="#1e1e1e"/><rect x="4.3" y="44.7" width="7.6" height="1.6" fill="#1e1e1e"/><rect x="18.9" y="44.7" width="7.6" height="1.6" fill="#1e1e1e"/><rect x="34.3" y="44.7" width="7.6" height="1.6" fill="#1e1e1e"/><rect x="49" y="44.7" width="7.6" height="1.6" fill="#1e1e1e"/><rect x="64.2" y="44.7" width="7.6" height="1.6" fill="#1e1e1e"/><rect x="4.3" y="51.7" width="7.6" height="1.6" fill="#1e1e1e"/><rect x="18.9" y="51.7" width="7.6" height="1.6" fill="#1e1e1e"/><rect x="34.3" y="51.7" width="7.6" height="1.6" fill="#1e1e1e"/><rect x="49" y="51.7" width="7.6" height="1.6" fill="#1e1e1e"/><rect x="64.2" y="51.7" width="7.6" height="1.6" fill="#1e1e1e"/></svg>
<div style="position:absolute;left:1015.65px;top:203.7px;font:400 12.5px/1 'Liberation Sans';color:#262626;white-space:pre;transform:scaleX(1.0465);transform-origin:0 0;">Estilos de tabla dinámica</div>
<div style="position:absolute;left:1419px;top:105px;width:1px;height:110px;background:#d6d6d6"></div>
<svg style="position:absolute;left:1884.0px;top:201.0px;" width="14" height="8" viewBox="0 0 14 8"><path d="M1 1 L7.0 7 L13 1" fill="none" stroke="#333" stroke-width="1.3"/></svg>
<div style="position:absolute;left:11px;top:232px;width:126px;height:30px;box-sizing:border-box;background:#fff;border:1px solid #e3dcda;border-radius:6px"></div>
<div style="position:absolute;left:17.50px;top:240.5px;font:400 14.5px/1 'Liberation Sans';color:#222;white-space:pre;transform:scaleX(0.9907);transform-origin:0 0;">C6</div>
<svg style="position:absolute;left:117.0px;top:244.7px;" width="14" height="8" viewBox="0 0 14 8"><path d="M1 1 L7.0 7 L13 1" fill="none" stroke="#333" stroke-width="1.4"/></svg>
<div style="position:absolute;left:148px;top:240.2px;width:3px;height:3px;background:#444;border-radius:0.5px"></div>
<div style="position:absolute;left:148px;top:246.2px;width:3px;height:3px;background:#444;border-radius:0.5px"></div>
<div style="position:absolute;left:148px;top:252.2px;width:3px;height:3px;background:#444;border-radius:0.5px"></div>
<div style="position:absolute;left:162px;top:232px;width:91px;height:30px;box-sizing:border-box;background:#fff;border:1px solid #e3dcda;border-radius:6px"></div>
<svg style="position:absolute;left:169px;top:238px;" width="18" height="18" viewBox="0 0 18 18"><path d="M2 2 L16 16 M16 2 L2 16" stroke="#b4b4b4" stroke-width="1.3"/></svg>
<svg style="position:absolute;left:196px;top:238px;" width="23" height="17" viewBox="0 0 23 17"><path d="M1.5 9 L7.5 15 L21.5 1.5" fill="none" stroke="#b4b4b4" stroke-width="1.3"/></svg>
<div style="position:absolute;left:229px;top:233.4px;font:italic 400 23px/1 'Liberation Serif';color:#333;transform:scaleX(1.07);transform-origin:0 0">fx</div>
<div style="position:absolute;left:259px;top:232px;width:1651px;height:30px;box-sizing:border-box;background:#fff;border:1px solid #e3dcda;border-radius:6px"></div>
<div style="position:absolute;left:273.30px;top:240.5px;font:400 14.5px/1 'Liberation Sans';color:#222;white-space:pre;transform:scaleX(1.0872);transform-origin:0 0;">3285</div>
<svg style="position:absolute;left:1891.0px;top:243.0px;" width="14" height="8" viewBox="0 0 14 8"><path d="M1 1 L7.0 7 L13 1" fill="none" stroke="#333" stroke-width="1.4"/></svg>
<div style="position:absolute;left:0px;top:270px;width:1483px;height:683px;background:#fff"></div>
<div style="position:absolute;left:0px;top:270px;width:1481px;height:23px;background:#efefef"></div>
<div style="position:absolute;left:33px;top:270px;width:680px;height:23px;background:#d3d3d3"></div>
<div style="position:absolute;left:0px;top:293px;width:1481px;height:1px;background:#a8a8a8"></div>
<div style="position:absolute;left:33px;top:292px;width:680px;height:2px;background:#1e6b45"></div>
<svg style="position:absolute;left:12px;top:272px;" width="20" height="20" viewBox="0 0 20 20"><path d="M18 3 V18 H3 Z" fill="#b9b9b9"/></svg>
<div style="position:absolute;left:182px;top:271px;width:1px;height:22px;background:#c4c4c4"></div>
<div style="position:absolute;left:443px;top:271px;width:1px;height:22px;background:#c4c4c4"></div>
<div style="position:absolute;left:713px;top:271px;width:1px;height:22px;background:#c4c4c4"></div>
<div style="position:absolute;left:841px;top:271px;width:1px;height:22px;background:#c4c4c4"></div>
<div style="position:absolute;left:949px;top:271px;width:1px;height:22px;background:#c4c4c4"></div>
<div style="position:absolute;left:1070px;top:271px;width:1px;height:22px;background:#c4c4c4"></div>
<div style="position:absolute;left:1183px;top:271px;width:1px;height:22px;background:#c4c4c4"></div>
<div style="position:absolute;left:1310px;top:271px;width:1px;height:22px;background:#c4c4c4"></div>
<div style="position:absolute;left:1426px;top:271px;width:1px;height:22px;background:#c4c4c4"></div>
<div style="position:absolute;left:87.50px;top:273.8px;font:400 16.5px/1 'Liberation Sans';color:#1e6b45;white-space:pre;width:40px;text-align:center;left:88.0px">A</div>
<div style="position:absolute;left:291.50px;top:273.8px;font:400 16.5px/1 'Liberation Sans';color:#1e6b45;white-space:pre;width:40px;text-align:center;left:293.0px">B</div>
<div style="position:absolute;left:558.00px;top:273.8px;font:400 16.5px/1 'Liberation Sans';color:#1e6b45;white-space:pre;width:40px;text-align:center;left:558.5px">C</div>
<div style="position:absolute;left:756.00px;top:273.8px;font:400 16.5px/1 'Liberation Sans';color:#222;white-space:pre;width:40px;text-align:center;left:757.5px">D</div>
<div style="position:absolute;left:874.00px;top:273.8px;font:400 16.5px/1 'Liberation Sans';color:#222;white-space:pre;width:40px;text-align:center;left:875.5px">E</div>
<div style="position:absolute;left:988.50px;top:273.8px;font:400 16.5px/1 'Liberation Sans';color:#222;white-space:pre;width:40px;text-align:center;left:990.0px">F</div>
<div style="position:absolute;left:1106.50px;top:273.8px;font:400 16.5px/1 'Liberation Sans';color:#222;white-space:pre;width:40px;text-align:center;left:1107.0px">G</div>
<div style="position:absolute;left:1225.50px;top:273.8px;font:400 16.5px/1 'Liberation Sans';color:#222;white-space:pre;width:40px;text-align:center;left:1227.0px">H</div>
<div style="position:absolute;left:1347.00px;top:273.8px;font:400 16.5px/1 'Liberation Sans';color:#222;white-space:pre;width:40px;text-align:center;left:1348.5px">I</div>
<div style="position:absolute;left:0px;top:294px;width:33px;height:659px;background:#efefef"></div>
<div style="position:absolute;left:0px;top:294px;width:33px;height:144px;background:#dadada"></div>
<div style="position:absolute;left:0px;top:317px;width:33px;height:1px;background:#c2c2c2"></div>
<div style="position:absolute;left:0px;top:341px;width:33px;height:1px;background:#c2c2c2"></div>
<div style="position:absolute;left:0px;top:365px;width:33px;height:1px;background:#c2c2c2"></div>
<div style="position:absolute;left:0px;top:389px;width:33px;height:1px;background:#c2c2c2"></div>
<div style="position:absolute;left:0px;top:413px;width:33px;height:1px;background:#c2c2c2"></div>
<div style="position:absolute;left:0px;top:437px;width:33px;height:1px;background:#c2c2c2"></div>
<div style="position:absolute;left:0px;top:461px;width:33px;height:1px;background:#c2c2c2"></div>
<div style="position:absolute;left:0px;top:485px;width:33px;height:1px;background:#c2c2c2"></div>
<div style="position:absolute;left:0px;top:509px;width:33px;height:1px;background:#c2c2c2"></div>
<div style="position:absolute;left:0px;top:533px;width:33px;height:1px;background:#c2c2c2"></div>
<div style="position:absolute;left:0px;top:557px;width:33px;height:1px;background:#c2c2c2"></div>
<div style="position:absolute;left:0px;top:581px;width:33px;height:1px;background:#c2c2c2"></div>
<div style="position:absolute;left:0px;top:605px;width:33px;height:1px;background:#c2c2c2"></div>
<div style="position:absolute;left:0px;top:629px;width:33px;height:1px;background:#c2c2c2"></div>
<div style="position:absolute;left:0px;top:653px;width:33px;height:1px;background:#c2c2c2"></div>
<div style="position:absolute;left:0px;top:677px;width:33px;height:1px;background:#c2c2c2"></div>
<div style="position:absolute;left:0px;top:701px;width:33px;height:1px;background:#c2c2c2"></div>
<div style="position:absolute;left:0px;top:725px;width:33px;height:1px;background:#c2c2c2"></div>
<div style="position:absolute;left:0px;top:749px;width:33px;height:1px;background:#c2c2c2"></div>
<div style="position:absolute;left:0px;top:773px;width:33px;height:1px;background:#c2c2c2"></div>
<div style="position:absolute;left:0px;top:797px;width:33px;height:1px;background:#c2c2c2"></div>
<div style="position:absolute;left:0px;top:821px;width:33px;height:1px;background:#c2c2c2"></div>
<div style="position:absolute;left:0px;top:845px;width:33px;height:1px;background:#c2c2c2"></div>
<div style="position:absolute;left:0px;top:869px;width:33px;height:1px;background:#c2c2c2"></div>
<div style="position:absolute;left:0px;top:893px;width:33px;height:1px;background:#c2c2c2"></div>
<div style="position:absolute;left:0px;top:917px;width:33px;height:1px;background:#c2c2c2"></div>
<div style="position:absolute;left:0px;top:941px;width:33px;height:1px;background:#c2c2c2"></div>
<div style="position:absolute;left:32px;top:294px;width:1px;height:659px;background:#a9a9a9"></div>
<div style="position:absolute;left:33px;top:317px;width:1448px;height:1px;background:#e1e1e1"></div>
<div style="position:absolute;left:33px;top:341px;width:1448px;height:1px;background:#e1e1e1"></div>
<div style="position:absolute;left:33px;top:365px;width:1448px;height:1px;background:#e1e1e1"></div>
<div style="position:absolute;left:33px;top:389px;width:1448px;height:1px;background:#e1e1e1"></div>
<div style="position:absolute;left:33px;top:413px;width:1448px;height:1px;background:#e1e1e1"></div>
<div style="position:absolute;left:33px;top:437px;width:1448px;height:1px;background:#e1e1e1"></div>
<div style="position:absolute;left:33px;top:461px;width:1448px;height:1px;background:#e1e1e1"></div>
<div style="position:absolute;left:33px;top:485px;width:1448px;height:1px;background:#e1e1e1"></div>
<div style="position:absolute;left:33px;top:509px;width:1448px;height:1px;background:#e1e1e1"></div>
<div style="position:absolute;left:33px;top:533px;width:1448px;height:1px;background:#e1e1e1"></div>
<div style="position:absolute;left:33px;top:557px;width:1448px;height:1px;background:#e1e1e1"></div>
<div style="position:absolute;left:33px;top:581px;width:1448px;height:1px;background:#e1e1e1"></div>
<div style="position:absolute;left:33px;top:605px;width:1448px;height:1px;background:#e1e1e1"></div>
<div style="position:absolute;left:33px;top:629px;width:1448px;height:1px;background:#e1e1e1"></div>
<div style="position:absolute;left:33px;top:653px;width:1448px;height:1px;background:#e1e1e1"></div>
<div style="position:absolute;left:33px;top:677px;width:1448px;height:1px;background:#e1e1e1"></div>
<div style="position:absolute;left:33px;top:701px;width:1448px;height:1px;background:#e1e1e1"></div>
<div style="position:absolute;left:33px;top:725px;width:1448px;height:1px;background:#e1e1e1"></div>
<div style="position:absolute;left:33px;top:749px;width:1448px;height:1px;background:#e1e1e1"></div>
<div style="position:absolute;left:33px;top:773px;width:1448px;height:1px;background:#e1e1e1"></div>
<div style="position:absolute;left:33px;top:797px;width:1448px;height:1px;background:#e1e1e1"></div>
<div style="position:absolute;left:33px;top:821px;width:1448px;height:1px;background:#e1e1e1"></div>
<div style="position:absolute;left:33px;top:845px;width:1448px;height:1px;background:#e1e1e1"></div>
<div style="position:absolute;left:33px;top:869px;width:1448px;height:1px;background:#e1e1e1"></div>
<div style="position:absolute;left:33px;top:893px;width:1448px;height:1px;background:#e1e1e1"></div>
<div style="position:absolute;left:33px;top:917px;width:1448px;height:1px;background:#e1e1e1"></div>
<div style="position:absolute;left:33px;top:941px;width:1448px;height:1px;background:#e1e1e1"></div>
<div style="position:absolute;left:182px;top:294px;width:1px;height:659px;background:#e1e1e1"></div>
<div style="position:absolute;left:443px;top:294px;width:1px;height:659px;background:#e1e1e1"></div>
<div style="position:absolute;left:713px;top:294px;width:1px;height:659px;background:#e1e1e1"></div>
<div style="position:absolute;left:841px;top:294px;width:1px;height:659px;background:#e1e1e1"></div>
<div style="position:absolute;left:949px;top:294px;width:1px;height:659px;background:#e1e1e1"></div>
<div style="position:absolute;left:1070px;top:294px;width:1px;height:659px;background:#e1e1e1"></div>
<div style="position:absolute;left:1183px;top:294px;width:1px;height:659px;background:#e1e1e1"></div>
<div style="position:absolute;left:1310px;top:294px;width:1px;height:659px;background:#e1e1e1"></div>
<div style="position:absolute;left:1426px;top:294px;width:1px;height:659px;background:#e1e1e1"></div>
<div style="position:absolute;left:34px;top:294px;width:679px;height:24px;background:#a9b3c3"></div>
<div style="position:absolute;left:34px;top:318px;width:679px;height:96px;background:#c8c8c8"></div>
<div style="position:absolute;left:34px;top:414px;width:410px;height:24px;background:#a9b3c3"></div>
<div style="position:absolute;left:444px;top:414px;width:269px;height:24px;background:#d9e1f2"></div>
<div style="position:absolute;left:34px;top:317px;width:679px;height:1px;background:#95a1b3"></div>
<div style="position:absolute;left:34px;top:341px;width:679px;height:1px;background:#7f8a9a"></div>
<div style="position:absolute;left:34px;top:413px;width:679px;height:1px;background:#7f8a9a"></div>
<div style="position:absolute;left:161px;top:296px;width:21px;height:20px;box-sizing:border-box;background:#c9ccd2;border:1px solid #9aa0a8"></div>
<svg style="position:absolute;left:163px;top:298px;" width="17" height="16" viewBox="0 0 17 16"><path d="M5 2.5 H15 L11.3 7 V12.5 L9 11 V7 Z" fill="#555"/><path d="M2 10 L4.2 12.3 L6.4 10 Z" fill="#555"/></svg>
<div style="position:absolute;left:38.00px;top:299.5px;font:700 14px/1 'Liberation Sans';color:#111;white-space:pre;transform:scaleX(1.0997);transform-origin:0 0;">Etiquetas de fila</div>
<div style="position:absolute;left:186.80px;top:299.5px;font:700 14px/1 'Liberation Sans';color:#111;white-space:pre;transform:scaleX(1.1079);transform-origin:0 0;">Recuento de Cat_Clientes.Cliente</div>
<div style="position:absolute;left:447.20px;top:299.5px;font:700 14px/1 'Liberation Sans';color:#111;white-space:pre;transform:scaleX(1.1155);transform-origin:0 0;">Suma de Cat_Productos.Categoria</div>
<svg style="position:absolute;left:41px;top:325px;" width="11" height="11" viewBox="0 0 11 11"><rect x="0.5" y="0.5" width="10" height="10" rx="1.5" fill="#d5d8de" stroke="#8d929a" stroke-width="1"/><path d="M2.5 5.5 H8.5" stroke="#333" stroke-width="1.1"/></svg>
<div style="position:absolute;left:55.80px;top:323.5px;font:700 14px/1 'Liberation Sans';color:#111;white-space:pre;transform:scaleX(1.0970);transform-origin:0 0;">2025</div>
<svg style="position:absolute;left:59px;top:349px;" width="11" height="11" viewBox="0 0 11 11"><rect x="0.5" y="0.5" width="10" height="10" rx="1.5" fill="#d5d8de" stroke="#8d929a" stroke-width="1"/><path d="M2.5 5.5 H8.5" stroke="#333" stroke-width="1.1"/><path d="M5.5 2.5 V8.5" stroke="#333" stroke-width="1.1"/></svg>
<div style="position:absolute;left:73.50px;top:347.5px;font:700 14px/1 'Liberation Sans';color:#111;white-space:pre;transform:scaleX(1.0670);transform-origin:0 0;">Tri1</div>
<div style="position:absolute;left:413.50px;top:347.5px;font:700 14px/1 'Liberation Sans';color:#111;white-space:pre;transform:scaleX(1.0903);transform-origin:0 0;">291</div>
<div style="position:absolute;left:674.30px;top:347.5px;font:700 14px/1 'Liberation Sans';color:#111;white-space:pre;transform:scaleX(1.1443);transform-origin:0 0;">1128</div>
<svg style="position:absolute;left:59px;top:373px;" width="11" height="11" viewBox="0 0 11 11"><rect x="0.5" y="0.5" width="10" height="10" rx="1.5" fill="#d5d8de" stroke="#8d929a" stroke-width="1"/><path d="M2.5 5.5 H8.5" stroke="#333" stroke-width="1.1"/><path d="M5.5 2.5 V8.5" stroke="#333" stroke-width="1.1"/></svg>
<div style="position:absolute;left:73.50px;top:371.5px;font:700 14px/1 'Liberation Sans';color:#111;white-space:pre;transform:scaleX(1.0670);transform-origin:0 0;">Tri2</div>
<div style="position:absolute;left:413.50px;top:371.5px;font:700 14px/1 'Liberation Sans';color:#111;white-space:pre;transform:scaleX(1.0903);transform-origin:0 0;">264</div>
<div style="position:absolute;left:674.30px;top:371.5px;font:700 14px/1 'Liberation Sans';color:#111;white-space:pre;transform:scaleX(1.1161);transform-origin:0 0;">1007</div>
<svg style="position:absolute;left:59px;top:397px;" width="11" height="11" viewBox="0 0 11 11"><rect x="0.5" y="0.5" width="10" height="10" rx="1.5" fill="#d5d8de" stroke="#8d929a" stroke-width="1"/><path d="M2.5 5.5 H8.5" stroke="#333" stroke-width="1.1"/><path d="M5.5 2.5 V8.5" stroke="#333" stroke-width="1.1"/></svg>
<div style="position:absolute;left:73.50px;top:395.5px;font:700 14px/1 'Liberation Sans';color:#111;white-space:pre;transform:scaleX(1.0670);transform-origin:0 0;">Tri3</div>
<div style="position:absolute;left:413.50px;top:395.5px;font:700 14px/1 'Liberation Sans';color:#111;white-space:pre;transform:scaleX(1.0903);transform-origin:0 0;">300</div>
<div style="position:absolute;left:674.30px;top:395.5px;font:700 14px/1 'Liberation Sans';color:#111;white-space:pre;transform:scaleX(1.1443);transform-origin:0 0;">1150</div>
<div style="position:absolute;left:37.50px;top:419.6px;font:700 14px/1 'Liberation Sans';color:#111;white-space:pre;transform:scaleX(1.1373);transform-origin:0 0;">Total general</div>
<div style="position:absolute;left:413.50px;top:419.6px;font:700 14px/1 'Liberation Sans';color:#111;white-space:pre;transform:scaleX(1.0903);transform-origin:0 0;">855</div>
<div style="position:absolute;left:674.30px;top:419.6px;font:700 14px/1 'Liberation Sans';color:#111;white-space:pre;transform:scaleX(1.1161);transform-origin:0 0;">3285</div>
<div style="position:absolute;left:32px;top:292px;width:683px;height:147px;box-sizing:border-box;border:2px solid #1e6b45;box-shadow:inset 0 0 0 1px rgba(255,255,255,0.75)"></div>
<div style="position:absolute;left:711px;top:434px;width:6px;height:6px;background:#1e6b45;outline:1px solid #fff"></div>
<div style="position:absolute;left:0;top:297.6px;width:32px;text-align:center;font:400 16.5px/1 'Liberation Sans';color:#2a6548">1</div>
<div style="position:absolute;left:0;top:321.6px;width:32px;text-align:center;font:400 16.5px/1 'Liberation Sans';color:#2a6548">2</div>
<div style="position:absolute;left:0;top:345.6px;width:32px;text-align:center;font:400 16.5px/1 'Liberation Sans';color:#2a6548">3</div>
<div style="position:absolute;left:0;top:369.6px;width:32px;text-align:center;font:400 16.5px/1 'Liberation Sans';color:#2a6548">4</div>
<div style="position:absolute;left:0;top:393.6px;width:32px;text-align:center;font:400 16.5px/1 'Liberation Sans';color:#2a6548">5</div>
<div style="position:absolute;left:0;top:417.6px;width:32px;text-align:center;font:400 16.5px/1 'Liberation Sans';color:#2a6548">6</div>
<div style="position:absolute;left:0;top:441.6px;width:32px;text-align:center;font:400 16.5px/1 'Liberation Sans';color:#222">7</div>
<div style="position:absolute;left:0;top:465.6px;width:32px;text-align:center;font:400 16.5px/1 'Liberation Sans';color:#222">8</div>
<div style="position:absolute;left:0;top:489.6px;width:32px;text-align:center;font:400 16.5px/1 'Liberation Sans';color:#222">9</div>
<div style="position:absolute;left:0;top:513.6px;width:32px;text-align:center;font:400 16.5px/1 'Liberation Sans';color:#222">10</div>
<div style="position:absolute;left:0;top:537.6px;width:32px;text-align:center;font:400 16.5px/1 'Liberation Sans';color:#222">11</div>
<div style="position:absolute;left:0;top:561.6px;width:32px;text-align:center;font:400 16.5px/1 'Liberation Sans';color:#222">12</div>
<div style="position:absolute;left:0;top:585.6px;width:32px;text-align:center;font:400 16.5px/1 'Liberation Sans';color:#222">13</div>
<div style="position:absolute;left:0;top:609.6px;width:32px;text-align:center;font:400 16.5px/1 'Liberation Sans';color:#222">14</div>
<div style="position:absolute;left:0;top:633.6px;width:32px;text-align:center;font:400 16.5px/1 'Liberation Sans';color:#222">15</div>
<div style="position:absolute;left:0;top:657.6px;width:32px;text-align:center;font:400 16.5px/1 'Liberation Sans';color:#222">16</div>
<div style="position:absolute;left:0;top:681.6px;width:32px;text-align:center;font:400 16.5px/1 'Liberation Sans';color:#222">17</div>
<div style="position:absolute;left:0;top:705.6px;width:32px;text-align:center;font:400 16.5px/1 'Liberation Sans';color:#222">18</div>
<div style="position:absolute;left:0;top:729.6px;width:32px;text-align:center;font:400 16.5px/1 'Liberation Sans';color:#222">19</div>
<div style="position:absolute;left:0;top:753.6px;width:32px;text-align:center;font:400 16.5px/1 'Liberation Sans';color:#222">20</div>
<div style="position:absolute;left:0;top:777.6px;width:32px;text-align:center;font:400 16.5px/1 'Liberation Sans';color:#222">21</div>
<div style="position:absolute;left:0;top:801.6px;width:32px;text-align:center;font:400 16.5px/1 'Liberation Sans';color:#222">22</div>
<div style="position:absolute;left:0;top:825.6px;width:32px;text-align:center;font:400 16.5px/1 'Liberation Sans';color:#222">23</div>
<div style="position:absolute;left:0;top:849.6px;width:32px;text-align:center;font:400 16.5px/1 'Liberation Sans';color:#222">24</div>
<div style="position:absolute;left:0;top:873.6px;width:32px;text-align:center;font:400 16.5px/1 'Liberation Sans';color:#222">25</div>
<div style="position:absolute;left:0;top:897.6px;width:32px;text-align:center;font:400 16.5px/1 'Liberation Sans';color:#222">26</div>
<div style="position:absolute;left:0;top:921.6px;width:32px;text-align:center;font:400 16.5px/1 'Liberation Sans';color:#222">27</div>
<div style="position:absolute;left:0;top:945.6px;width:32px;text-align:center;font:400 16.5px/1 'Liberation Sans';color:#222">28</div>
<div style="position:absolute;left:1481px;top:270px;width:26px;height:683px;background:#f0e9e7"></div>
<div style="position:absolute;left:1483px;top:271px;width:22px;height:684px;background:#f6f6f6;border-radius:11px"></div>
<svg style="position:absolute;left:1488px;top:276px;" width="13" height="10" viewBox="0 0 13 10"><path d="M6.5 1 L12 8.6 H1 Z" fill="#6e6e6e" stroke="#6e6e6e" stroke-width="1" stroke-linejoin="round"/></svg>
<div style="position:absolute;left:1489px;top:291px;width:11px;height:620px;background:#6e6e6e;border-radius:5.5px"></div>
<svg style="position:absolute;left:1488px;top:940px;" width="13" height="10" viewBox="0 0 13 10"><path d="M1 1.4 H12 L6.5 9 Z" fill="#6e6e6e" stroke="#6e6e6e" stroke-width="1" stroke-linejoin="round"/></svg>
<div style="position:absolute;left:0px;top:953px;width:1507px;height:40px;background:#fff"></div>
<div style="position:absolute;left:0px;top:953px;width:340px;height:40px;background:#efe8e6;border-radius:0 7px 0 0"></div>
<div style="position:absolute;left:445px;top:953px;width:1062px;height:40px;background:#efe8e6;border-radius:7px 0 0 0"></div>
<div style="position:absolute;left:0px;top:993px;width:1919px;height:1px;background:#d7d1cf"></div>
<svg style="position:absolute;left:29px;top:964px;" width="12" height="16" viewBox="0 0 12 16"><path d="M9 2 L3 8 L9 14" fill="none" stroke="#a0a0a0" stroke-width="1.4"/></svg>
<svg style="position:absolute;left:70px;top:964px;" width="12" height="16" viewBox="0 0 12 16"><path d="M3 2 L9 8 L3 14" fill="none" stroke="#707070" stroke-width="1.4"/></svg>
<div style="position:absolute;left:152.00px;top:965.6px;font:400 17px/1 'Liberation Sans';color:#333;white-space:pre;transform:scaleX(0.9446);transform-origin:0 0;">Clase_Power_Query_1</div>
<div style="position:absolute;left:334px;top:961px;width:1px;height:23px;background:#cbc5c3"></div>
<div style="position:absolute;left:340px;top:950px;width:105px;height:38px;background:#fff;border-radius:0 0 7px 7px;box-shadow:0 1px 1px rgba(0,0,0,0.08)"></div>
<div style="position:absolute;left:350.50px;top:961.9px;font:400 17px/1 'Liberation Sans';color:#1e1e1e;white-space:pre;transform:scaleX(1.0335);transform-origin:0 0;-webkit-text-stroke:0.4px #1e1e1e">Calendario</div>
<div style="position:absolute;left:350px;top:982.5px;width:85px;height:2.5px;background:#2b6048;border-radius:1px"></div>
<div style="position:absolute;left:450px;top:961px;width:1px;height:23px;background:#cbc5c3"></div>
<svg style="position:absolute;left:502px;top:964px;" width="16" height="16" viewBox="0 0 16 16"><path d="M8 1 V15 M1 8 H15" stroke="#444" stroke-width="1.5"/></svg>
<div style="position:absolute;left:907.5px;top:966.8px;width:2.6px;height:2.6px;background:#333"></div>
<div style="position:absolute;left:907.5px;top:972.3px;width:2.6px;height:2.6px;background:#333"></div>
<div style="position:absolute;left:907.5px;top:977.8px;width:2.6px;height:2.6px;background:#333"></div>
<div style="position:absolute;left:928.6px;top:962px;width:554px;height:20.5px;background:#f5f5f5;border-radius:10px"></div>
<svg style="position:absolute;left:934px;top:966px;" width="11" height="13" viewBox="0 0 11 13"><path d="M9.6 1.2 V11.8 L1.6 6.5 Z" fill="#6e6e6e" stroke="#6e6e6e" stroke-width="1" stroke-linejoin="round"/></svg>
<div style="position:absolute;left:950px;top:967px;width:303px;height:11px;background:#6e6e6e;border-radius:5.5px"></div>
<svg style="position:absolute;left:1468px;top:966px;" width="11" height="13" viewBox="0 0 11 13"><path d="M1.4 1.2 V11.8 L9.4 6.5 Z" fill="#6e6e6e" stroke="#6e6e6e" stroke-width="1" stroke-linejoin="round"/></svg>
<div style="position:absolute;left:0px;top:994px;width:1919px;height:26px;background:#f3f3f3"></div>
<div style="position:absolute;left:0px;top:1020px;width:1919px;height:3px;background:#1b1b1b"></div>
<div style="position:absolute;left:13.41px;top:1000.8px;font:400 13px/1 'Liberation Sans';color:#444;white-space:pre;transform:scaleX(0.9874);transform-origin:0 0;">Listo</div>
<svg style="position:absolute;left:55px;top:994px;" width="34" height="26" viewBox="0 0 34 26"><circle cx="19.8" cy="6.9" r="2.3" fill="none" stroke="#222" stroke-width="1.25"/><path d="M18.6 9.2 C16.8 9 15 7.4 13.2 7.4 C11.9 7.6 11.9 9.7 13.5 10.1 C15 10.5 16.4 10.7 16.6 12 V16.2 C16.6 18 15.3 19 15 20.3 C14.8 21.3 16.5 21.6 17.8 20.6" fill="none" stroke="#222" stroke-width="1.25"/><path d="M21 9.2 C22.8 9 24.6 7.4 26.4 7.4 C27.7 7.6 27.7 9.7 26.1 10.1 C24.6 10.5 23.1 10.7 22.9 12 V14.6" fill="none" stroke="#222" stroke-width="1.25"/><path d="M20.3 17.2 L24.2 21.1 L30.6 14.6" fill="none" stroke="#222" stroke-width="1.3"/></svg>
<div style="position:absolute;left:89.60px;top:1000px;font:400 13px/1 'Liberation Sans';color:#444;white-space:pre;transform:scaleX(1.0268);transform-origin:0 0;">Accesibilidad: todo correcto</div>
<div style="position:absolute;left:1246.29px;top:1001.4px;font:400 13px/1 'Liberation Sans';color:#444;white-space:pre;transform:scaleX(1.0061);transform-origin:0 0;">Promedio: 1035</div>
<div style="position:absolute;left:1359.42px;top:1001.4px;font:400 13px/1 'Liberation Sans';color:#444;white-space:pre;transform:scaleX(0.9763);transform-origin:0 0;">Recuento: 16</div>
<div style="position:absolute;left:1455.70px;top:1001.4px;font:400 13px/1 'Liberation Sans';color:#444;white-space:pre;transform:scaleX(0.9460);transform-origin:0 0;">Suma: 8280</div>
<div style="position:absolute;left:1547px;top:994px;width:50px;height:26px;background:#e1e1e1"></div>
<svg style="position:absolute;left:1562px;top:998px;" width="19" height="17" viewBox="0 0 19 17"><rect x="1.5" y="1" width="16" height="15" fill="none" stroke="#444" stroke-width="1.6"/><path d="M1.5 6 H17.5 M1.5 11 H17.5 M6.8 1 V16 M12.2 1 V16" stroke="#444" stroke-width="1.6"/></svg>
<svg style="position:absolute;left:1612px;top:998px;" width="20" height="17" viewBox="0 0 20 17"><rect x="1.2" y="1" width="17.5" height="15" fill="none" stroke="#444" stroke-width="1.5"/><rect x="5" y="3.8" width="10" height="9.5" fill="none" stroke="#444" stroke-width="1.2"/><path d="M7 6.5 H13 M7 8.7 H13 M7 10.9 H13" stroke="#444" stroke-width="1"/></svg>
<svg style="position:absolute;left:1662px;top:998px;" width="20" height="17" viewBox="0 0 20 17"><path d="M1.2 1 V16 H18.8 V1 H1.2 M1.2 9 H7.5 V1 M11 1 V6 H13 V1" fill="none" stroke="#444" stroke-width="1.5"/></svg>
<div style="position:absolute;left:1704px;top:1006px;width:9px;height:1.3px;background:#444"></div>
<div style="position:absolute;left:1720.5px;top:1006.5px;width:125px;height:1px;background:#777"></div>
<div style="position:absolute;left:1780px;top:1000px;width:6px;height:14px;background:#666"></div>
<svg style="position:absolute;left:1850px;top:1000px;" width="12" height="13" viewBox="0 0 12 13"><path d="M6 1 V12 M0.8 6.5 H11.2" stroke="#444" stroke-width="1.3"/></svg>
<div style="position:absolute;left:1877.70px;top:1000.9px;font:400 13px/1 'Liberation Sans';color:#444;white-space:pre;transform:scaleX(0.9083);transform-origin:0 0;">100%</div>
<div style="position:absolute;left:1507px;top:270px;width:362px;height:723px;background:#f0f0f0"></div>
<div style="position:absolute;left:1507px;top:272px;width:1px;height:718px;background:#c6c6c6"></div>
<div style="position:absolute;left:1869px;top:270px;width:50px;height:723px;background:#f9f9f9"></div>
<div style="position:absolute;left:1871px;top:270px;width:56px;height:50px;box-sizing:border-box;background:#e6e6e6;border:1px solid #a8a8a8;border-radius:8px"></div>
<svg style="position:absolute;left:1885px;top:283px;" width="18" height="24" viewBox="0 0 18 24"><rect x="1.2" y="1.2" width="15.6" height="21" fill="#fff" stroke="#4a4a4a" stroke-width="1.6"/><path d="M4.5 5 H13.5 M4.5 8.5 H13.5" stroke="#555" stroke-width="1.1"/><path d="M1.2 13.5 H16.8 M1.2 17.8 H16.8 M9 13.5 V22" stroke="#4a4a4a" stroke-width="1.5"/></svg>
<svg style="position:absolute;left:1883px;top:334px;" width="24" height="22" viewBox="0 0 24 22"><rect x="1.2" y="1.2" width="21.5" height="19" fill="#fff" stroke="#4a4a4a" stroke-width="1.6"/><path d="M1.2 5 H22.7" stroke="#4a4a4a" stroke-width="1.5"/><rect x="15" y="5.5" width="6.8" height="14.5" fill="#cfe6f6"/><path d="M15 5 V20.5" stroke="#4a4a4a" stroke-width="1.3"/><path d="M17 9 H21 M17 12.5 H21 M17 16 H21" stroke="#3d8fc6" stroke-width="1.3"/></svg>
<div style="position:absolute;left:1522.30px;top:291.8px;font:400 18px/1 'Liberation Sans';color:#222;white-space:pre;transform:scaleX(1.0098);transform-origin:0 0;-webkit-text-stroke:0.55px #222">Campos de tabla dinámica</div>
<svg style="position:absolute;left:1780px;top:292px;" width="22" height="14" viewBox="0 0 22 14"><path d="M2 2.5 L11 11.5 L20 2.5" fill="none" stroke="#333" stroke-width="1.4"/></svg>
<svg style="position:absolute;left:1834px;top:291px;" width="17" height="17" viewBox="0 0 17 17"><path d="M2 2 L15 15 M15 2 L2 15" stroke="#333" stroke-width="1.4"/></svg>
<div style="position:absolute;left:1524.60px;top:331.2px;font:400 15.5px/1 'Liberation Sans';color:#262626;white-space:pre;transform:scaleX(0.9907);transform-origin:0 0;">Activo</div>
<div style="position:absolute;left:1596.70px;top:331.2px;font:400 15.5px/1 'Liberation Sans';color:#262626;white-space:pre;transform:scaleX(0.9445);transform-origin:0 0;">Todas</div>
<div style="position:absolute;left:1523px;top:357px;width:44px;height:3px;background:#1e6b45"></div>
<div style="position:absolute;left:1524.60px;top:368.3px;font:400 15px/1 'Liberation Sans';color:#262626;white-space:pre;transform:scaleX(0.9841);transform-origin:0 0;">Seleccionar campos para agregar al</div>
<div style="position:absolute;left:1523.54px;top:387px;font:400 15px/1 'Liberation Sans';color:#262626;white-space:pre;transform:scaleX(1.0554);transform-origin:0 0;">informe:</div>
<div style="position:absolute;left:1798px;top:367px;width:57px;height:35px;box-sizing:border-box;background:#fff;border:1px solid #8a8a8a"></div>
<svg style="position:absolute;left:1809px;top:373px;" width="22" height="22" viewBox="0 0 22 22"><path d="M11.00 4.50 L12.23 4.01 L13.87 2.16 L17.22 4.09 L16.44 6.44 L16.63 7.75 L17.67 8.57 L20.10 9.07 L20.10 12.93 L17.67 13.43 L16.63 14.25 L16.44 15.56 L17.22 17.91 L13.87 19.84 L12.23 17.99 L11.00 17.50 L9.77 17.99 L8.13 19.84 L4.78 17.91 L5.56 15.56 L5.37 14.25 L4.33 13.43 L1.90 12.93 L1.90 9.07 L4.33 8.57 L5.37 7.75 L5.56 6.44 L4.78 4.09 L8.13 2.16 L9.77 4.01 Z" fill="none" stroke="#333" stroke-width="1.3" stroke-linejoin="round"/><circle cx="11" cy="11" r="3.3" fill="none" stroke="#333" stroke-width="1.3"/></svg>
<svg style="position:absolute;left:1839.0px;top:381.9px;" width="9" height="5.6" viewBox="0 0 9 5.6"><path d="M1 1 L4.5 4.6 L8 1" fill="none" stroke="#333" stroke-width="1.3"/></svg>
<div style="position:absolute;left:1523px;top:421px;width:332px;height:30px;box-sizing:border-box;background:#fff;border:1px solid #a9a9a9"></div>
<div style="position:absolute;left:1531.29px;top:426.6px;font:400 15px/1 'Liberation Sans';color:#6b6b6b;white-space:pre;transform:scaleX(0.9105);transform-origin:0 0;">Buscar</div>
<svg style="position:absolute;left:1829px;top:425px;" width="22" height="22" viewBox="0 0 22 22"><circle cx="13.6" cy="7.8" r="5.2" fill="none" stroke="#333" stroke-width="1.4"/><path d="M9.8 11.6 L2.5 19" stroke="#333" stroke-width="1.5"/></svg>
<div style="position:absolute;left:1523px;top:471px;width:332px;height:161px;box-sizing:border-box;background:#fff;border:1px solid #a9a9a9;overflow:hidden"><div style="position:absolute;left:309px;top:0;width:22px;height:160px;background:#f7f7f7"></div></div>
<svg style="position:absolute;left:1571px;top:468px;" width="16" height="16" viewBox="0 0 16 16"><rect x="0.6" y="0.6" width="14.8" height="14.8" rx="2" fill="#fff" stroke="#6b6b6b" stroke-width="1.2"/></svg>
<div style="position:absolute;left:1523px;top:467px;width:332px;height:4px;background:#f0f0f0"></div>
<div style="position:absolute;left:1523px;top:471px;width:332px;height:1px;background:#a9a9a9"></div>
<svg style="position:absolute;left:1571px;top:500px;" width="16" height="16" viewBox="0 0 16 16"><rect x="0.6" y="0.6" width="14.8" height="14.8" rx="2" fill="#fff" stroke="#6b6b6b" stroke-width="1.2"/></svg>
<svg style="position:absolute;left:1571px;top:531px;" width="16" height="16" viewBox="0 0 16 16"><rect x="0" y="0" width="16" height="16" rx="1.5" fill="#17804a"/><path d="M3.8 8.2 L6.8 11.2 L12.4 5" fill="none" stroke="#fff" stroke-width="1.4"/></svg>
<svg style="position:absolute;left:1571px;top:562px;" width="16" height="16" viewBox="0 0 16 16"><rect x="0.6" y="0.6" width="14.8" height="14.8" rx="2" fill="#fff" stroke="#6b6b6b" stroke-width="1.2"/></svg>
<svg style="position:absolute;left:1571px;top:593px;" width="16" height="16" viewBox="0 0 16 16"><rect x="0" y="0" width="16" height="16" rx="1.5" fill="#17804a"/><path d="M3.8 8.2 L6.8 11.2 L12.4 5" fill="none" stroke="#fff" stroke-width="1.4"/></svg>
<div style="position:absolute;left:1594.60px;top:472.6px;font:400 15px/1 'Liberation Sans';color:#262626;white-space:pre;transform:scaleX(0.9438);transform-origin:0 0;">Ventas1.Precio</div>
<div style="position:absolute;left:1594.60px;top:503.79999999999995px;font:400 15px/1 'Liberation Sans';color:#262626;white-space:pre;transform:scaleX(0.9620);transform-origin:0 0;">Ventas1.Precio con Descuento</div>
<div style="position:absolute;left:1594.60px;top:534.9px;font:700 15px/1 'Liberation Sans';color:#1a1a1a;white-space:pre;transform:scaleX(0.9344);transform-origin:0 0;">Cat_Clientes.Cliente</div>
<div style="position:absolute;left:1594.60px;top:566px;font:400 15px/1 'Liberation Sans';color:#262626;white-space:pre;transform:scaleX(0.9541);transform-origin:0 0;">Cat_Productos.Producto</div>
<div style="position:absolute;left:1594.60px;top:597.1px;font:700 15px/1 'Liberation Sans';color:#1a1a1a;white-space:pre;transform:scaleX(0.9403);transform-origin:0 0;">Cat_Productos.Categoria</div>
<div style="position:absolute;left:1524px;top:620px;width:300px;height:11px;overflow:hidden"><div style="position:absolute;left:47px;top:4px;width:16px;height:16px;background:#17804a;border-radius:1.5px"></div><div style="position:absolute;left:70px;top:6px;font:700 15px/1 'Liberation Sans';color:#1a1a1a">Fecha (año)</div><div style="position:absolute;left:290px;top:7px;width:15px;height:10px;border:1px solid #555;background:#fff"></div></div>
<svg style="position:absolute;left:1837px;top:477px;" width="13" height="10" viewBox="0 0 13 10"><path d="M6.5 1 L12 8.6 H1 Z" fill="#6e6e6e" stroke="#6e6e6e" stroke-width="1" stroke-linejoin="round"/></svg>
<div style="position:absolute;left:1838px;top:557px;width:11px;height:21px;background:#6e6e6e"></div>
<svg style="position:absolute;left:1837px;top:615px;" width="13" height="10" viewBox="0 0 13 10"><path d="M1 1.4 H12 L6.5 9 Z" fill="#6e6e6e" stroke="#6e6e6e" stroke-width="1" stroke-linejoin="round"/></svg>
<div style="position:absolute;left:1525px;top:651px;width:334px;height:0;border-top:1px dotted #c8c8c8"></div>
<div style="position:absolute;left:1528.70px;top:659.7px;font:400 14.5px/1 'Liberation Sans';color:#262626;white-space:pre;">Arrastrar campos entre las áreas siguientes:</div>
<div style="position:absolute;left:1527px;top:696px;width:1px;height:229px;background:#c6c6c6"></div>
<svg style="position:absolute;left:1532px;top:699px;" width="16" height="16" viewBox="0 0 16 16"><path d="M1 1.5 H15 L9.5 7.5 V14.5 L6.5 12.5 V7.5 Z" fill="#666"/></svg>
<div style="position:absolute;left:1554.88px;top:701.3px;font:400 15px/1 'Liberation Sans';color:#262626;white-space:pre;transform:scaleX(1.0195);transform-origin:0 0;">Filtros</div>
<svg style="position:absolute;left:1699px;top:701px;" width="13" height="13" viewBox="0 0 13 13"><path d="M1 0 V12 M4 0 V12 M7 0 V12 M10 0 V12" stroke="#888" stroke-width="1.6"/><path d="M0 0.8 H12" stroke="#888" stroke-width="1.4"/></svg>
<div style="position:absolute;left:1721.00px;top:701.3px;font:400 15px/1 'Liberation Sans';color:#262626;white-space:pre;transform:scaleX(0.9682);transform-origin:0 0;">Columnas</div>
<div style="position:absolute;left:1528px;top:723px;width:156px;height:80px;background:#fff"></div>
<div style="position:absolute;left:1693px;top:723px;width:162px;height:80px;background:#fff"></div>
<div style="position:absolute;left:1694px;top:725px;width:159.70000000000005px;height:26px;box-sizing:border-box;background:#fff;border:1px solid #c8c8c8"></div>
<svg style="position:absolute;left:1704px;top:730px;" width="16" height="17" viewBox="0 0 16 17"><path d="M13.5 3 V1.5 H2 L8 8.5 L2 15.5 H13.5 V14" fill="none" stroke="#333" stroke-width="1.4"/></svg>
<div style="position:absolute;left:1725.60px;top:731px;font:400 15px/1 'Liberation Sans';color:#262626;white-space:pre;transform:scaleX(0.9808);transform-origin:0 0;">Valores</div>
<svg style="position:absolute;left:1836.5px;top:735.75px;" width="8" height="5.5" viewBox="0 0 8 5.5"><path d="M1 1 L4.0 4.5 L7 1" fill="none" stroke="#333" stroke-width="1.3"/></svg>
<div style="position:absolute;left:1528px;top:810px;width:327px;height:1px;background:#c9c9c9"></div>
<svg style="position:absolute;left:1533px;top:821px;" width="15" height="14" viewBox="0 0 15 14"><path d="M1 2 H14 M1 5 H14 M1 8 H14 M1 11 H14" stroke="#888" stroke-width="1.5"/></svg>
<div style="position:absolute;left:1554.93px;top:822px;font:400 15px/1 'Liberation Sans';color:#262626;white-space:pre;transform:scaleX(0.9679);transform-origin:0 0;">Filas</div>
<svg style="position:absolute;left:1698px;top:821px;" width="14" height="14" viewBox="0 0 14 14"><path d="M12 3 V1.5 H1.5 L6.8 7 L1.5 12.5 H12 V11" fill="none" stroke="#888" stroke-width="1.5"/></svg>
<div style="position:absolute;left:1721.00px;top:822px;font:400 15px/1 'Liberation Sans';color:#262626;white-space:pre;transform:scaleX(0.9909);transform-origin:0 0;">Valores</div>
<div style="position:absolute;left:1693px;top:843px;width:162px;height:82px;background:#fff"></div>
<div style="position:absolute;left:1529.7px;top:845px;width:132px;height:25px;box-sizing:border-box;background:#fff;border:1px solid #c8c8c8"></div>
<div style="position:absolute;left:1537.15px;top:850px;font:400 15px/1 'Liberation Sans';color:#262626;white-space:pre;transform:scaleX(0.9539);transform-origin:0 0;">Fecha (año)</div>
<svg style="position:absolute;left:1644.6px;top:854.75px;" width="8" height="5.5" viewBox="0 0 8 5.5"><path d="M1 1 L4.0 4.5 L7 1" fill="none" stroke="#333" stroke-width="1.3"/></svg>
<div style="position:absolute;left:1529.7px;top:873px;width:132px;height:25px;box-sizing:border-box;background:#fff;border:1px solid #c8c8c8"></div>
<div style="position:absolute;left:1537.15px;top:878px;font:400 15px/1 'Liberation Sans';color:#262626;white-space:pre;transform:scaleX(0.9549);transform-origin:0 0;">Fecha (trimest...</div>
<svg style="position:absolute;left:1644.6px;top:882.75px;" width="8" height="5.5" viewBox="0 0 8 5.5"><path d="M1 1 L4.0 4.5 L7 1" fill="none" stroke="#333" stroke-width="1.3"/></svg>
<div style="position:absolute;left:1529.7px;top:901px;width:132px;height:25px;box-sizing:border-box;background:#fff;border:1px solid #c8c8c8"></div>
<div style="position:absolute;left:1537.16px;top:906px;font:400 15px/1 'Liberation Sans';color:#262626;white-space:pre;transform:scaleX(0.9424);transform-origin:0 0;">Fecha (mes)</div>
<svg style="position:absolute;left:1644.6px;top:910.75px;" width="8" height="5.5" viewBox="0 0 8 5.5"><path d="M1 1 L4.0 4.5 L7 1" fill="none" stroke="#333" stroke-width="1.3"/></svg>
<div style="position:absolute;left:1526px;top:925px;width:340px;height:30px;background:#f0f0f0"></div>
<div style="position:absolute;left:1527px;top:696px;width:1px;height:229px;background:#c6c6c6"></div>
<svg style="position:absolute;left:1667px;top:848px;" width="13" height="10" viewBox="0 0 13 10"><path d="M6.5 1 L12 8.6 H1 Z" fill="#6e6e6e" stroke="#6e6e6e" stroke-width="1" stroke-linejoin="round"/></svg>
<div style="position:absolute;left:1668px;top:866px;width:11px;height:26px;background:#6e6e6e"></div>
<svg style="position:absolute;left:1667px;top:909px;" width="13" height="10" viewBox="0 0 13 10"><path d="M1 1.4 H12 L6.5 9 Z" fill="#6e6e6e" stroke="#6e6e6e" stroke-width="1" stroke-linejoin="round"/></svg>
<div style="position:absolute;left:1694.4px;top:846px;width:159.3px;height:25px;box-sizing:border-box;background:#fff;border:1px solid #c8c8c8"></div>
<div style="position:absolute;left:1702.36px;top:851px;font:400 15px/1 'Liberation Sans';color:#262626;white-space:pre;transform:scaleX(0.9425);transform-origin:0 0;">Recuento de Cat_...</div>
<svg style="position:absolute;left:1836.5px;top:855.75px;" width="8" height="5.5" viewBox="0 0 8 5.5"><path d="M1 1 L4.0 4.5 L7 1" fill="none" stroke="#333" stroke-width="1.3"/></svg>
<div style="position:absolute;left:1694.4px;top:874px;width:159.3px;height:25px;box-sizing:border-box;background:#fff;border:1px solid #c8c8c8"></div>
<div style="position:absolute;left:1703.30px;top:879px;font:400 15px/1 'Liberation Sans';color:#262626;white-space:pre;transform:scaleX(0.9121);transform-origin:0 0;">Suma de Cat_Prod...</div>
<svg style="position:absolute;left:1836.5px;top:883.75px;" width="8" height="5.5" viewBox="0 0 8 5.5"><path d="M1 1 L4.0 4.5 L7 1" fill="none" stroke="#333" stroke-width="1.3"/></svg>
<svg style="position:absolute;left:1531px;top:957px;" width="16" height="16" viewBox="0 0 16 16"><rect x="0.6" y="0.6" width="14.8" height="14.8" rx="2" fill="#fff" stroke="#6b6b6b" stroke-width="1.2"/></svg>
<div style="position:absolute;left:1555.70px;top:958px;font:400 15px/1 'Liberation Sans';color:#262626;white-space:pre;transform:scaleX(0.9870);transform-origin:0 0;">Aplazar actualización del dis...</div>
<div style="position:absolute;left:1775.5px;top:949px;width:79.5px;height:31px;box-sizing:border-box;border:1px solid #d2d2d2;background:#f0f0f0"></div>
<div style="position:absolute;left:1782.80px;top:958px;font:400 15px/1 'Liberation Sans';color:#a6a6a6;white-space:pre;transform:scaleX(0.9838);transform-origin:0 0;">Actualizar</div>
<div style="position:absolute;left:1687.29px;top:916px;font:700 88px/1 'Liberation Sans';color:rgba(0,0,0,0.055);white-space:pre;transform:scaleX(0.9412);transform-origin:0 0;">Platzi</div>
<svg style="position:absolute;left:1575px;top:905px;" width="100" height="110" viewBox="0 0 100 110"><path d="M50 6 L94 50 L50 94 L6 50 Z" fill="none" stroke="rgba(150,200,80,0.10)" stroke-width="14" stroke-linejoin="round"/></svg></div></body></html>
